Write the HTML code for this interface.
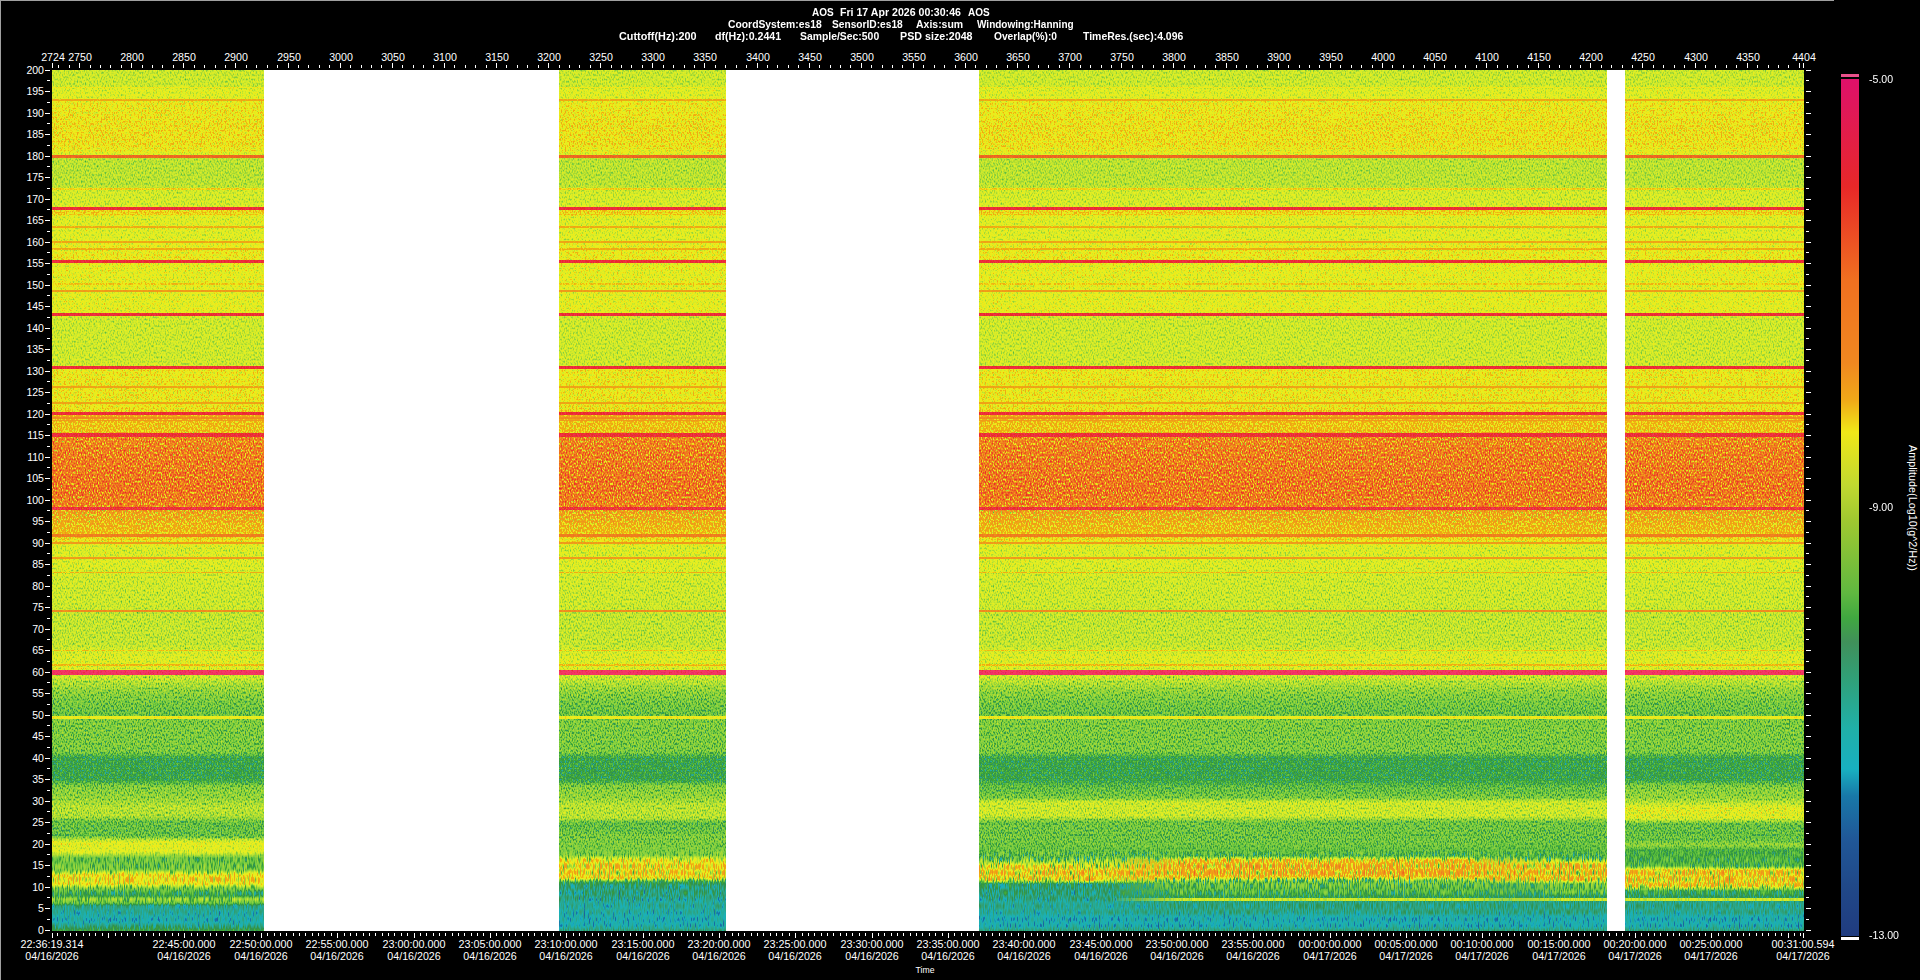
<!DOCTYPE html><html><head><meta charset="utf-8"><style>
html,body{margin:0;padding:0;background:#000;width:1920px;height:980px;overflow:hidden;position:relative;font-family:"Liberation Sans", sans-serif;color:#fff}
.t{position:absolute;white-space:nowrap;line-height:12px;font-size:10.5px}
.b{font-weight:bold}
.c{transform:translateX(-50%)}
.r{transform:translateX(-100%)}
</style></head><body>
<div style="position:absolute;left:0;top:0;width:1834px;height:1px;background:#a0a0a0"></div>
<div style="position:absolute;left:0;top:0;width:1px;height:980px;background:#a0a0a0"></div>
<div style="position:absolute;left:52px;top:70px;width:1752px;height:861px;background:#fff"></div>
<svg style="position:absolute;left:52px;top:70px" width="1752" height="861" shape-rendering="crispEdges"><defs><filter id="sp" x="0" y="0" width="1" height="1" color-interpolation-filters="sRGB"><feColorMatrix in="SourceGraphic" type="matrix" values="1 0 0 0 0 1 0 0 0 0 1 0 0 0 0 0 0 0 0 1" result="base"/><feColorMatrix in="SourceGraphic" type="matrix" values="0 1 0 0 0 0 1 0 0 0 0 1 0 0 0 0 0 0 0 1" result="amp"/><feColorMatrix in="SourceGraphic" type="matrix" values="0 0 1 0 0 0 0 1 0 0 0 0 1 0 0 0 0 0 0 1" result="mix"/><feTurbulence type="fractalNoise" baseFrequency="0.75 0.45" numOctaves="1" seed="7" result="t1"/><feColorMatrix in="t1" type="matrix" values="1 0 0 0 0 1 0 0 0 0 1 0 0 0 0 0 0 0 0 1" result="n1"/><feTurbulence type="fractalNoise" baseFrequency="0.8 0.15" numOctaves="1" seed="11" result="t2"/><feColorMatrix in="t2" type="matrix" values="1 0 0 0 0 1 0 0 0 0 1 0 0 0 0 0 0 0 0 1" result="n2"/><feComposite in="n2" in2="mix" operator="arithmetic" k1="1" k2="0" k3="0" k4="0" result="p"/><feComposite in="n1" in2="mix" operator="arithmetic" k1="-1" k2="1" k3="0" k4="0" result="q"/><feComposite in="p" in2="q" operator="arithmetic" k1="0" k2="1" k3="1" k4="0" result="n0"/><feComponentTransfer in="n0" result="n"><feFuncR type="table" tableValues="0.000 0.000 0.000 0.062 0.125 0.188 0.250 0.312 0.375 0.438 0.500 0.530 0.560 0.590 0.620 0.650 0.680 0.710 0.740 0.770 0.800"/><feFuncG type="table" tableValues="0.000 0.000 0.000 0.062 0.125 0.188 0.250 0.312 0.375 0.438 0.500 0.530 0.560 0.590 0.620 0.650 0.680 0.710 0.740 0.770 0.800"/><feFuncB type="table" tableValues="0.000 0.000 0.000 0.062 0.125 0.188 0.250 0.312 0.375 0.438 0.500 0.530 0.560 0.590 0.620 0.650 0.680 0.710 0.740 0.770 0.800"/></feComponentTransfer><feComposite in="amp" in2="n" operator="arithmetic" k1="1.0" k2="-0.5" k3="0" k4="0.5" result="x"/><feComposite in="base" in2="x" operator="arithmetic" k1="0" k2="1" k3="1" k4="-0.5" result="y"/><feComponentTransfer in="y"><feFuncR type="table" tableValues="0.125 0.125 0.125 0.125 0.125 0.125 0.125 0.125 0.125 0.125 0.125 0.125 0.122 0.116 0.109 0.103 0.097 0.094 0.094 0.094 0.097 0.103 0.110 0.116 0.123 0.132 0.143 0.154 0.165 0.176 0.187 0.188 0.188 0.188 0.188 0.202 0.224 0.246 0.286 0.329 0.372 0.414 0.455 0.496 0.537 0.570 0.603 0.637 0.670 0.704 0.739 0.774 0.803 0.831 0.858 0.885 0.911 0.921 0.930 0.940 0.941 0.941 0.941 0.941 0.941 0.941 0.941 0.941 0.941 0.941 0.941 0.941 0.941 0.941 0.941 0.941 0.941 0.940 0.937 0.934 0.931 0.928 0.925 0.923 0.920 0.917 0.914 0.911 0.916 0.926 0.937 0.947 0.957 0.967 0.956 0.924 0.891 0.878 0.878 0.878 0.878"/><feFuncG type="table" tableValues="0.235 0.243 0.251 0.259 0.267 0.275 0.282 0.294 0.305 0.317 0.328 0.339 0.358 0.384 0.409 0.435 0.460 0.512 0.580 0.649 0.690 0.690 0.690 0.690 0.690 0.684 0.673 0.662 0.651 0.640 0.629 0.614 0.600 0.585 0.571 0.585 0.618 0.652 0.685 0.717 0.750 0.768 0.784 0.801 0.817 0.827 0.837 0.847 0.857 0.870 0.887 0.905 0.915 0.921 0.928 0.935 0.940 0.930 0.921 0.911 0.786 0.686 0.672 0.658 0.644 0.630 0.615 0.601 0.587 0.573 0.558 0.540 0.522 0.504 0.486 0.468 0.450 0.429 0.403 0.376 0.350 0.324 0.298 0.272 0.246 0.220 0.193 0.167 0.165 0.177 0.190 0.203 0.216 0.229 0.216 0.178 0.141 0.115 0.098 0.080 0.063"/><feFuncB type="table" tableValues="0.502 0.507 0.512 0.518 0.523 0.528 0.533 0.545 0.556 0.568 0.579 0.590 0.602 0.615 0.628 0.641 0.654 0.676 0.706 0.735 0.745 0.725 0.706 0.686 0.667 0.639 0.606 0.573 0.540 0.507 0.474 0.431 0.387 0.344 0.300 0.269 0.246 0.224 0.228 0.239 0.250 0.251 0.251 0.251 0.250 0.236 0.223 0.210 0.196 0.188 0.188 0.188 0.179 0.165 0.151 0.138 0.125 0.115 0.105 0.095 0.076 0.065 0.072 0.079 0.086 0.093 0.100 0.107 0.114 0.121 0.125 0.125 0.125 0.125 0.125 0.125 0.125 0.127 0.130 0.132 0.135 0.138 0.141 0.144 0.147 0.150 0.153 0.156 0.183 0.227 0.271 0.314 0.358 0.402 0.415 0.399 0.383 0.383 0.394 0.405 0.416"/><feFuncA type="identity"/></feComponentTransfer></filter><linearGradient id="g_A" gradientUnits="userSpaceOnUse" x1="0" y1="0" x2="0" y2="861"><stop offset="0.00000" stop-color="rgb(133,82,0)"/><stop offset="0.01858" stop-color="rgb(133,82,0)"/><stop offset="0.02207" stop-color="rgb(140,82,0)"/><stop offset="0.03368" stop-color="rgb(140,82,0)"/><stop offset="0.03833" stop-color="rgb(147,82,0)"/><stop offset="0.05575" stop-color="rgb(148,82,0)"/><stop offset="0.06388" stop-color="rgb(149,82,0)"/><stop offset="0.08711" stop-color="rgb(149,82,0)"/><stop offset="0.09524" stop-color="rgb(145,82,0)"/><stop offset="0.10221" stop-color="rgb(128,82,0)"/><stop offset="0.13473" stop-color="rgb(128,82,0)"/><stop offset="0.14170" stop-color="rgb(136,82,0)"/><stop offset="0.15679" stop-color="rgb(136,82,0)"/><stop offset="0.16492" stop-color="rgb(153,82,0)"/><stop offset="0.17189" stop-color="rgb(140,82,0)"/><stop offset="0.19744" stop-color="rgb(140,82,0)"/><stop offset="0.20325" stop-color="rgb(144,82,0)"/><stop offset="0.21835" stop-color="rgb(147,82,0)"/><stop offset="0.22648" stop-color="rgb(144,82,0)"/><stop offset="0.24623" stop-color="rgb(143,82,0)"/><stop offset="0.25784" stop-color="rgb(142,82,0)"/><stop offset="0.28107" stop-color="rgb(143,82,0)"/><stop offset="0.28804" stop-color="rgb(134,82,0)"/><stop offset="0.34262" stop-color="rgb(134,82,0)"/><stop offset="0.34843" stop-color="rgb(147,82,0)"/><stop offset="0.36585" stop-color="rgb(147,82,0)"/><stop offset="0.38792" stop-color="rgb(147,82,0)"/><stop offset="0.39605" stop-color="rgb(150,82,0)"/><stop offset="0.40186" stop-color="rgb(163,82,0)"/><stop offset="0.40767" stop-color="rgb(156,82,0)"/><stop offset="0.41812" stop-color="rgb(155,82,0)"/><stop offset="0.42044" stop-color="rgb(154,120,0)"/><stop offset="0.42625" stop-color="rgb(184,217,0)"/><stop offset="0.44135" stop-color="rgb(189,217,0)"/><stop offset="0.47619" stop-color="rgb(193,217,0)"/><stop offset="0.49361" stop-color="rgb(193,217,0)"/><stop offset="0.50639" stop-color="rgb(186,217,0)"/><stop offset="0.51336" stop-color="rgb(168,186,0)"/><stop offset="0.53426" stop-color="rgb(157,92,0)"/><stop offset="0.53659" stop-color="rgb(156,92,0)"/><stop offset="0.54239" stop-color="rgb(152,92,0)"/><stop offset="0.55052" stop-color="rgb(144,92,0)"/><stop offset="0.55517" stop-color="rgb(139,92,0)"/><stop offset="0.56446" stop-color="rgb(139,92,0)"/><stop offset="0.56911" stop-color="rgb(140,92,0)"/><stop offset="0.59233" stop-color="rgb(135,92,0)"/><stop offset="0.62602" stop-color="rgb(133,92,0)"/><stop offset="0.63066" stop-color="rgb(131,92,0)"/><stop offset="0.66783" stop-color="rgb(131,92,0)"/><stop offset="0.67944" stop-color="rgb(139,92,0)"/><stop offset="0.68525" stop-color="rgb(139,92,0)"/><stop offset="0.69454" stop-color="rgb(140,97,0)"/><stop offset="0.70383" stop-color="rgb(133,102,0)"/><stop offset="0.70499" stop-color="rgb(133,102,0)"/><stop offset="0.72009" stop-color="rgb(117,102,0)"/><stop offset="0.73171" stop-color="rgb(110,102,0)"/><stop offset="0.74797" stop-color="rgb(105,102,0)"/><stop offset="0.75377" stop-color="rgb(111,102,0)"/><stop offset="0.79210" stop-color="rgb(110,102,0)"/><stop offset="0.79907" stop-color="rgb(92,102,0)"/><stop offset="0.82462" stop-color="rgb(92,102,0)"/><stop offset="0.83159" stop-color="rgb(112,102,0)"/><stop offset="0.84553" stop-color="rgb(117,102,0)"/><stop offset="0.85714" stop-color="rgb(128,102,0)"/><stop offset="0.86643" stop-color="rgb(125,102,0)"/><stop offset="0.87340" stop-color="rgb(105,102,0)"/><stop offset="0.88966" stop-color="rgb(105,102,0)"/><stop offset="0.89431" stop-color="rgb(129,102,0)"/><stop offset="0.89663" stop-color="rgb(142,102,23)"/><stop offset="0.90825" stop-color="rgb(140,102,139)"/><stop offset="0.91521" stop-color="rgb(105,102,209)"/><stop offset="0.91986" stop-color="rgb(106,102,255)"/><stop offset="0.92683" stop-color="rgb(109,102,255)"/><stop offset="0.92915" stop-color="rgb(110,117,255)"/><stop offset="0.93264" stop-color="rgb(133,140,255)"/><stop offset="0.93496" stop-color="rgb(149,140,255)"/><stop offset="0.94541" stop-color="rgb(147,140,255)"/><stop offset="0.94774" stop-color="rgb(129,140,255)"/><stop offset="0.95006" stop-color="rgb(112,128,255)"/><stop offset="0.95238" stop-color="rgb(104,115,255)"/><stop offset="0.95587" stop-color="rgb(92,115,255)"/><stop offset="0.95935" stop-color="rgb(92,115,255)"/><stop offset="0.96283" stop-color="rgb(117,115,255)"/><stop offset="0.96748" stop-color="rgb(105,115,255)"/><stop offset="0.97096" stop-color="rgb(74,89,255)"/><stop offset="0.98142" stop-color="rgb(64,89,255)"/><stop offset="0.98955" stop-color="rgb(59,89,255)"/><stop offset="0.99419" stop-color="rgb(76,89,255)"/><stop offset="0.99884" stop-color="rgb(92,89,255)"/><stop offset="1.00000" stop-color="rgb(92,89,255)"/></linearGradient><linearGradient id="g_B" gradientUnits="userSpaceOnUse" x1="0" y1="0" x2="0" y2="861"><stop offset="0.00000" stop-color="rgb(133,82,0)"/><stop offset="0.01858" stop-color="rgb(133,82,0)"/><stop offset="0.02207" stop-color="rgb(140,82,0)"/><stop offset="0.03368" stop-color="rgb(140,82,0)"/><stop offset="0.03833" stop-color="rgb(147,82,0)"/><stop offset="0.05575" stop-color="rgb(148,82,0)"/><stop offset="0.06388" stop-color="rgb(149,82,0)"/><stop offset="0.08711" stop-color="rgb(149,82,0)"/><stop offset="0.09524" stop-color="rgb(145,82,0)"/><stop offset="0.10221" stop-color="rgb(128,82,0)"/><stop offset="0.13473" stop-color="rgb(128,82,0)"/><stop offset="0.14170" stop-color="rgb(136,82,0)"/><stop offset="0.15679" stop-color="rgb(136,82,0)"/><stop offset="0.16492" stop-color="rgb(153,82,0)"/><stop offset="0.17189" stop-color="rgb(140,82,0)"/><stop offset="0.19744" stop-color="rgb(140,82,0)"/><stop offset="0.20325" stop-color="rgb(144,82,0)"/><stop offset="0.21835" stop-color="rgb(147,82,0)"/><stop offset="0.22648" stop-color="rgb(144,82,0)"/><stop offset="0.24623" stop-color="rgb(143,82,0)"/><stop offset="0.25784" stop-color="rgb(142,82,0)"/><stop offset="0.28107" stop-color="rgb(143,82,0)"/><stop offset="0.28804" stop-color="rgb(134,82,0)"/><stop offset="0.34262" stop-color="rgb(134,82,0)"/><stop offset="0.34843" stop-color="rgb(147,82,0)"/><stop offset="0.36585" stop-color="rgb(147,82,0)"/><stop offset="0.38792" stop-color="rgb(147,82,0)"/><stop offset="0.39605" stop-color="rgb(150,82,0)"/><stop offset="0.40186" stop-color="rgb(163,82,0)"/><stop offset="0.40767" stop-color="rgb(156,82,0)"/><stop offset="0.41812" stop-color="rgb(155,82,0)"/><stop offset="0.42044" stop-color="rgb(154,120,0)"/><stop offset="0.42625" stop-color="rgb(184,217,0)"/><stop offset="0.44135" stop-color="rgb(189,217,0)"/><stop offset="0.47619" stop-color="rgb(193,217,0)"/><stop offset="0.49361" stop-color="rgb(193,217,0)"/><stop offset="0.50639" stop-color="rgb(186,217,0)"/><stop offset="0.51336" stop-color="rgb(168,186,0)"/><stop offset="0.53426" stop-color="rgb(157,92,0)"/><stop offset="0.53659" stop-color="rgb(156,92,0)"/><stop offset="0.54239" stop-color="rgb(152,92,0)"/><stop offset="0.55052" stop-color="rgb(144,92,0)"/><stop offset="0.55517" stop-color="rgb(139,92,0)"/><stop offset="0.56446" stop-color="rgb(139,92,0)"/><stop offset="0.56911" stop-color="rgb(140,92,0)"/><stop offset="0.59233" stop-color="rgb(135,92,0)"/><stop offset="0.62602" stop-color="rgb(133,92,0)"/><stop offset="0.63066" stop-color="rgb(131,92,0)"/><stop offset="0.66783" stop-color="rgb(131,92,0)"/><stop offset="0.67944" stop-color="rgb(139,92,0)"/><stop offset="0.68525" stop-color="rgb(139,92,0)"/><stop offset="0.69454" stop-color="rgb(140,97,0)"/><stop offset="0.70383" stop-color="rgb(133,102,0)"/><stop offset="0.70499" stop-color="rgb(133,102,0)"/><stop offset="0.72009" stop-color="rgb(117,102,0)"/><stop offset="0.73171" stop-color="rgb(110,102,0)"/><stop offset="0.74797" stop-color="rgb(105,102,0)"/><stop offset="0.75377" stop-color="rgb(111,102,0)"/><stop offset="0.79210" stop-color="rgb(110,102,0)"/><stop offset="0.79907" stop-color="rgb(92,102,0)"/><stop offset="0.82462" stop-color="rgb(92,102,0)"/><stop offset="0.83159" stop-color="rgb(112,102,0)"/><stop offset="0.84553" stop-color="rgb(117,102,0)"/><stop offset="0.85366" stop-color="rgb(128,102,0)"/><stop offset="0.86876" stop-color="rgb(128,102,0)"/><stop offset="0.87340" stop-color="rgb(105,102,0)"/><stop offset="0.88269" stop-color="rgb(105,102,0)"/><stop offset="0.88966" stop-color="rgb(110,102,0)"/><stop offset="0.89431" stop-color="rgb(110,102,0)"/><stop offset="0.90825" stop-color="rgb(110,102,139)"/><stop offset="0.91173" stop-color="rgb(110,134,174)"/><stop offset="0.91521" stop-color="rgb(131,166,209)"/><stop offset="0.91754" stop-color="rgb(145,166,232)"/><stop offset="0.91986" stop-color="rgb(147,166,255)"/><stop offset="0.92451" stop-color="rgb(150,166,255)"/><stop offset="0.93844" stop-color="rgb(150,166,255)"/><stop offset="0.94077" stop-color="rgb(121,166,255)"/><stop offset="0.94309" stop-color="rgb(92,140,255)"/><stop offset="0.94541" stop-color="rgb(84,115,255)"/><stop offset="0.94774" stop-color="rgb(76,115,255)"/><stop offset="0.95935" stop-color="rgb(76,115,255)"/><stop offset="0.96400" stop-color="rgb(69,115,255)"/><stop offset="0.96748" stop-color="rgb(68,89,255)"/><stop offset="0.97793" stop-color="rgb(66,89,255)"/><stop offset="0.98490" stop-color="rgb(59,89,255)"/><stop offset="0.99303" stop-color="rgb(59,89,255)"/><stop offset="0.99884" stop-color="rgb(76,89,255)"/><stop offset="1.00000" stop-color="rgb(76,89,255)"/></linearGradient><linearGradient id="g_CL" gradientUnits="userSpaceOnUse" x1="0" y1="0" x2="0" y2="861"><stop offset="0.00000" stop-color="rgb(133,82,0)"/><stop offset="0.01858" stop-color="rgb(133,82,0)"/><stop offset="0.02207" stop-color="rgb(140,82,0)"/><stop offset="0.03368" stop-color="rgb(140,82,0)"/><stop offset="0.03833" stop-color="rgb(147,82,0)"/><stop offset="0.05575" stop-color="rgb(148,82,0)"/><stop offset="0.06388" stop-color="rgb(149,82,0)"/><stop offset="0.08711" stop-color="rgb(149,82,0)"/><stop offset="0.09524" stop-color="rgb(145,82,0)"/><stop offset="0.10221" stop-color="rgb(128,82,0)"/><stop offset="0.13473" stop-color="rgb(128,82,0)"/><stop offset="0.14170" stop-color="rgb(136,82,0)"/><stop offset="0.15679" stop-color="rgb(136,82,0)"/><stop offset="0.16492" stop-color="rgb(153,82,0)"/><stop offset="0.17189" stop-color="rgb(140,82,0)"/><stop offset="0.19744" stop-color="rgb(140,82,0)"/><stop offset="0.20325" stop-color="rgb(144,82,0)"/><stop offset="0.21835" stop-color="rgb(147,82,0)"/><stop offset="0.22648" stop-color="rgb(144,82,0)"/><stop offset="0.24623" stop-color="rgb(143,82,0)"/><stop offset="0.25784" stop-color="rgb(142,82,0)"/><stop offset="0.28107" stop-color="rgb(143,82,0)"/><stop offset="0.28804" stop-color="rgb(134,82,0)"/><stop offset="0.34262" stop-color="rgb(134,82,0)"/><stop offset="0.34843" stop-color="rgb(147,82,0)"/><stop offset="0.36585" stop-color="rgb(147,82,0)"/><stop offset="0.38792" stop-color="rgb(147,82,0)"/><stop offset="0.39605" stop-color="rgb(150,82,0)"/><stop offset="0.40186" stop-color="rgb(163,82,0)"/><stop offset="0.40767" stop-color="rgb(156,82,0)"/><stop offset="0.41812" stop-color="rgb(155,82,0)"/><stop offset="0.42044" stop-color="rgb(154,120,0)"/><stop offset="0.42625" stop-color="rgb(184,217,0)"/><stop offset="0.44135" stop-color="rgb(189,217,0)"/><stop offset="0.47619" stop-color="rgb(193,217,0)"/><stop offset="0.49361" stop-color="rgb(193,217,0)"/><stop offset="0.50639" stop-color="rgb(186,217,0)"/><stop offset="0.51336" stop-color="rgb(168,186,0)"/><stop offset="0.53426" stop-color="rgb(157,92,0)"/><stop offset="0.53659" stop-color="rgb(156,92,0)"/><stop offset="0.54239" stop-color="rgb(152,92,0)"/><stop offset="0.55052" stop-color="rgb(144,92,0)"/><stop offset="0.55517" stop-color="rgb(139,92,0)"/><stop offset="0.56446" stop-color="rgb(139,92,0)"/><stop offset="0.56911" stop-color="rgb(140,92,0)"/><stop offset="0.59233" stop-color="rgb(135,92,0)"/><stop offset="0.62602" stop-color="rgb(133,92,0)"/><stop offset="0.63066" stop-color="rgb(131,92,0)"/><stop offset="0.66783" stop-color="rgb(131,92,0)"/><stop offset="0.67944" stop-color="rgb(139,92,0)"/><stop offset="0.68525" stop-color="rgb(139,92,0)"/><stop offset="0.69454" stop-color="rgb(140,97,0)"/><stop offset="0.70383" stop-color="rgb(133,102,0)"/><stop offset="0.70499" stop-color="rgb(133,102,0)"/><stop offset="0.72009" stop-color="rgb(117,102,0)"/><stop offset="0.73171" stop-color="rgb(110,102,0)"/><stop offset="0.74797" stop-color="rgb(105,102,0)"/><stop offset="0.75377" stop-color="rgb(111,102,0)"/><stop offset="0.79210" stop-color="rgb(110,102,0)"/><stop offset="0.79907" stop-color="rgb(92,102,0)"/><stop offset="0.82462" stop-color="rgb(92,102,0)"/><stop offset="0.83159" stop-color="rgb(102,102,0)"/><stop offset="0.84553" stop-color="rgb(110,102,0)"/><stop offset="0.85017" stop-color="rgb(134,102,0)"/><stop offset="0.86643" stop-color="rgb(134,102,0)"/><stop offset="0.87340" stop-color="rgb(107,102,0)"/><stop offset="0.89431" stop-color="rgb(107,102,0)"/><stop offset="0.90012" stop-color="rgb(107,102,58)"/><stop offset="0.90592" stop-color="rgb(105,102,116)"/><stop offset="0.91289" stop-color="rgb(103,204,185)"/><stop offset="0.91521" stop-color="rgb(102,204,209)"/><stop offset="0.91986" stop-color="rgb(122,204,255)"/><stop offset="0.92451" stop-color="rgb(143,204,255)"/><stop offset="0.93148" stop-color="rgb(152,204,255)"/><stop offset="0.94077" stop-color="rgb(150,204,255)"/><stop offset="0.94309" stop-color="rgb(115,204,255)"/><stop offset="0.94541" stop-color="rgb(79,159,255)"/><stop offset="0.94774" stop-color="rgb(79,115,255)"/><stop offset="0.96167" stop-color="rgb(76,115,255)"/><stop offset="0.96400" stop-color="rgb(73,115,255)"/><stop offset="0.96632" stop-color="rgb(69,98,255)"/><stop offset="0.96748" stop-color="rgb(69,89,255)"/><stop offset="0.97909" stop-color="rgb(69,89,255)"/><stop offset="0.98374" stop-color="rgb(59,89,255)"/><stop offset="0.99419" stop-color="rgb(59,89,255)"/><stop offset="0.99884" stop-color="rgb(76,89,255)"/><stop offset="1.00000" stop-color="rgb(76,89,255)"/></linearGradient><linearGradient id="g_CM" gradientUnits="userSpaceOnUse" x1="0" y1="0" x2="0" y2="861"><stop offset="0.00000" stop-color="rgb(133,82,0)"/><stop offset="0.01858" stop-color="rgb(133,82,0)"/><stop offset="0.02207" stop-color="rgb(140,82,0)"/><stop offset="0.03368" stop-color="rgb(140,82,0)"/><stop offset="0.03833" stop-color="rgb(147,82,0)"/><stop offset="0.05575" stop-color="rgb(148,82,0)"/><stop offset="0.06388" stop-color="rgb(149,82,0)"/><stop offset="0.08711" stop-color="rgb(149,82,0)"/><stop offset="0.09524" stop-color="rgb(145,82,0)"/><stop offset="0.10221" stop-color="rgb(128,82,0)"/><stop offset="0.13473" stop-color="rgb(128,82,0)"/><stop offset="0.14170" stop-color="rgb(136,82,0)"/><stop offset="0.15679" stop-color="rgb(136,82,0)"/><stop offset="0.16492" stop-color="rgb(153,82,0)"/><stop offset="0.17189" stop-color="rgb(140,82,0)"/><stop offset="0.19744" stop-color="rgb(140,82,0)"/><stop offset="0.20325" stop-color="rgb(144,82,0)"/><stop offset="0.21835" stop-color="rgb(147,82,0)"/><stop offset="0.22648" stop-color="rgb(144,82,0)"/><stop offset="0.24623" stop-color="rgb(143,82,0)"/><stop offset="0.25784" stop-color="rgb(142,82,0)"/><stop offset="0.28107" stop-color="rgb(143,82,0)"/><stop offset="0.28804" stop-color="rgb(134,82,0)"/><stop offset="0.34262" stop-color="rgb(134,82,0)"/><stop offset="0.34843" stop-color="rgb(147,82,0)"/><stop offset="0.36585" stop-color="rgb(147,82,0)"/><stop offset="0.38792" stop-color="rgb(147,82,0)"/><stop offset="0.39605" stop-color="rgb(150,82,0)"/><stop offset="0.40186" stop-color="rgb(163,82,0)"/><stop offset="0.40767" stop-color="rgb(156,82,0)"/><stop offset="0.41812" stop-color="rgb(155,82,0)"/><stop offset="0.42044" stop-color="rgb(154,120,0)"/><stop offset="0.42625" stop-color="rgb(184,217,0)"/><stop offset="0.44135" stop-color="rgb(189,217,0)"/><stop offset="0.47619" stop-color="rgb(193,217,0)"/><stop offset="0.49361" stop-color="rgb(193,217,0)"/><stop offset="0.50639" stop-color="rgb(186,217,0)"/><stop offset="0.51336" stop-color="rgb(168,186,0)"/><stop offset="0.53426" stop-color="rgb(157,92,0)"/><stop offset="0.53659" stop-color="rgb(156,92,0)"/><stop offset="0.54239" stop-color="rgb(152,92,0)"/><stop offset="0.55052" stop-color="rgb(144,92,0)"/><stop offset="0.55517" stop-color="rgb(139,92,0)"/><stop offset="0.56446" stop-color="rgb(139,92,0)"/><stop offset="0.56911" stop-color="rgb(140,92,0)"/><stop offset="0.59233" stop-color="rgb(135,92,0)"/><stop offset="0.62602" stop-color="rgb(133,92,0)"/><stop offset="0.63066" stop-color="rgb(131,92,0)"/><stop offset="0.66783" stop-color="rgb(131,92,0)"/><stop offset="0.67944" stop-color="rgb(139,92,0)"/><stop offset="0.68525" stop-color="rgb(139,92,0)"/><stop offset="0.69454" stop-color="rgb(140,97,0)"/><stop offset="0.70383" stop-color="rgb(133,102,0)"/><stop offset="0.70499" stop-color="rgb(133,102,0)"/><stop offset="0.72009" stop-color="rgb(117,102,0)"/><stop offset="0.73171" stop-color="rgb(110,102,0)"/><stop offset="0.74797" stop-color="rgb(105,102,0)"/><stop offset="0.75377" stop-color="rgb(111,102,0)"/><stop offset="0.79210" stop-color="rgb(110,102,0)"/><stop offset="0.79907" stop-color="rgb(92,102,0)"/><stop offset="0.82462" stop-color="rgb(92,102,0)"/><stop offset="0.83159" stop-color="rgb(102,102,0)"/><stop offset="0.84553" stop-color="rgb(110,102,0)"/><stop offset="0.85017" stop-color="rgb(134,102,0)"/><stop offset="0.86643" stop-color="rgb(134,102,0)"/><stop offset="0.87340" stop-color="rgb(107,102,0)"/><stop offset="0.89431" stop-color="rgb(107,102,0)"/><stop offset="0.90012" stop-color="rgb(107,102,58)"/><stop offset="0.90592" stop-color="rgb(104,102,116)"/><stop offset="0.91289" stop-color="rgb(99,204,185)"/><stop offset="0.91754" stop-color="rgb(153,204,232)"/><stop offset="0.91986" stop-color="rgb(156,204,255)"/><stop offset="0.92451" stop-color="rgb(163,204,255)"/><stop offset="0.93612" stop-color="rgb(163,204,255)"/><stop offset="0.94193" stop-color="rgb(107,204,255)"/><stop offset="0.94309" stop-color="rgb(107,204,255)"/><stop offset="0.94774" stop-color="rgb(104,115,255)"/><stop offset="0.95238" stop-color="rgb(102,115,255)"/><stop offset="0.95935" stop-color="rgb(92,115,255)"/><stop offset="0.96400" stop-color="rgb(82,115,255)"/><stop offset="0.96632" stop-color="rgb(76,98,255)"/><stop offset="0.96748" stop-color="rgb(76,89,255)"/><stop offset="0.97909" stop-color="rgb(74,89,255)"/><stop offset="0.98374" stop-color="rgb(59,89,255)"/><stop offset="0.99419" stop-color="rgb(59,89,255)"/><stop offset="0.99884" stop-color="rgb(76,89,255)"/><stop offset="1.00000" stop-color="rgb(76,89,255)"/></linearGradient><linearGradient id="g_CR" gradientUnits="userSpaceOnUse" x1="0" y1="0" x2="0" y2="861"><stop offset="0.00000" stop-color="rgb(133,82,0)"/><stop offset="0.01858" stop-color="rgb(133,82,0)"/><stop offset="0.02207" stop-color="rgb(140,82,0)"/><stop offset="0.03368" stop-color="rgb(140,82,0)"/><stop offset="0.03833" stop-color="rgb(147,82,0)"/><stop offset="0.05575" stop-color="rgb(148,82,0)"/><stop offset="0.06388" stop-color="rgb(149,82,0)"/><stop offset="0.08711" stop-color="rgb(149,82,0)"/><stop offset="0.09524" stop-color="rgb(145,82,0)"/><stop offset="0.10221" stop-color="rgb(128,82,0)"/><stop offset="0.13473" stop-color="rgb(128,82,0)"/><stop offset="0.14170" stop-color="rgb(136,82,0)"/><stop offset="0.15679" stop-color="rgb(136,82,0)"/><stop offset="0.16492" stop-color="rgb(153,82,0)"/><stop offset="0.17189" stop-color="rgb(140,82,0)"/><stop offset="0.19744" stop-color="rgb(140,82,0)"/><stop offset="0.20325" stop-color="rgb(144,82,0)"/><stop offset="0.21835" stop-color="rgb(147,82,0)"/><stop offset="0.22648" stop-color="rgb(144,82,0)"/><stop offset="0.24623" stop-color="rgb(143,82,0)"/><stop offset="0.25784" stop-color="rgb(142,82,0)"/><stop offset="0.28107" stop-color="rgb(143,82,0)"/><stop offset="0.28804" stop-color="rgb(134,82,0)"/><stop offset="0.34262" stop-color="rgb(134,82,0)"/><stop offset="0.34843" stop-color="rgb(147,82,0)"/><stop offset="0.36585" stop-color="rgb(147,82,0)"/><stop offset="0.38792" stop-color="rgb(147,82,0)"/><stop offset="0.39605" stop-color="rgb(150,82,0)"/><stop offset="0.40186" stop-color="rgb(163,82,0)"/><stop offset="0.40767" stop-color="rgb(156,82,0)"/><stop offset="0.41812" stop-color="rgb(155,82,0)"/><stop offset="0.42044" stop-color="rgb(154,120,0)"/><stop offset="0.42625" stop-color="rgb(184,217,0)"/><stop offset="0.44135" stop-color="rgb(189,217,0)"/><stop offset="0.47619" stop-color="rgb(193,217,0)"/><stop offset="0.49361" stop-color="rgb(193,217,0)"/><stop offset="0.50639" stop-color="rgb(186,217,0)"/><stop offset="0.51336" stop-color="rgb(168,186,0)"/><stop offset="0.53426" stop-color="rgb(157,92,0)"/><stop offset="0.53659" stop-color="rgb(156,92,0)"/><stop offset="0.54239" stop-color="rgb(152,92,0)"/><stop offset="0.55052" stop-color="rgb(144,92,0)"/><stop offset="0.55517" stop-color="rgb(139,92,0)"/><stop offset="0.56446" stop-color="rgb(139,92,0)"/><stop offset="0.56911" stop-color="rgb(140,92,0)"/><stop offset="0.59233" stop-color="rgb(135,92,0)"/><stop offset="0.62602" stop-color="rgb(133,92,0)"/><stop offset="0.63066" stop-color="rgb(131,92,0)"/><stop offset="0.66783" stop-color="rgb(131,92,0)"/><stop offset="0.67944" stop-color="rgb(139,92,0)"/><stop offset="0.68525" stop-color="rgb(139,92,0)"/><stop offset="0.69454" stop-color="rgb(140,97,0)"/><stop offset="0.70383" stop-color="rgb(133,102,0)"/><stop offset="0.70499" stop-color="rgb(133,102,0)"/><stop offset="0.72009" stop-color="rgb(117,102,0)"/><stop offset="0.73171" stop-color="rgb(110,102,0)"/><stop offset="0.74797" stop-color="rgb(105,102,0)"/><stop offset="0.75377" stop-color="rgb(111,102,0)"/><stop offset="0.79210" stop-color="rgb(110,102,0)"/><stop offset="0.79907" stop-color="rgb(92,102,0)"/><stop offset="0.82462" stop-color="rgb(92,102,0)"/><stop offset="0.83159" stop-color="rgb(102,102,0)"/><stop offset="0.84553" stop-color="rgb(110,102,0)"/><stop offset="0.85017" stop-color="rgb(134,102,0)"/><stop offset="0.86643" stop-color="rgb(134,102,0)"/><stop offset="0.87340" stop-color="rgb(107,102,0)"/><stop offset="0.89431" stop-color="rgb(105,102,0)"/><stop offset="0.90012" stop-color="rgb(105,102,58)"/><stop offset="0.90592" stop-color="rgb(102,102,116)"/><stop offset="0.91289" stop-color="rgb(98,204,185)"/><stop offset="0.91521" stop-color="rgb(97,204,209)"/><stop offset="0.91986" stop-color="rgb(138,204,255)"/><stop offset="0.92102" stop-color="rgb(148,204,255)"/><stop offset="0.92683" stop-color="rgb(154,204,255)"/><stop offset="0.94077" stop-color="rgb(153,204,255)"/><stop offset="0.94309" stop-color="rgb(130,204,255)"/><stop offset="0.94541" stop-color="rgb(107,159,255)"/><stop offset="0.94774" stop-color="rgb(106,115,255)"/><stop offset="0.95470" stop-color="rgb(105,115,255)"/><stop offset="0.95935" stop-color="rgb(87,115,255)"/><stop offset="0.96400" stop-color="rgb(80,115,255)"/><stop offset="0.96632" stop-color="rgb(76,98,255)"/><stop offset="0.96748" stop-color="rgb(76,89,255)"/><stop offset="0.97909" stop-color="rgb(76,89,255)"/><stop offset="0.98374" stop-color="rgb(59,89,255)"/><stop offset="0.99419" stop-color="rgb(59,89,255)"/><stop offset="0.99884" stop-color="rgb(76,89,255)"/><stop offset="1.00000" stop-color="rgb(76,89,255)"/></linearGradient><linearGradient id="g_D" gradientUnits="userSpaceOnUse" x1="0" y1="0" x2="0" y2="861"><stop offset="0.00000" stop-color="rgb(133,82,0)"/><stop offset="0.01858" stop-color="rgb(133,82,0)"/><stop offset="0.02207" stop-color="rgb(140,82,0)"/><stop offset="0.03368" stop-color="rgb(140,82,0)"/><stop offset="0.03833" stop-color="rgb(147,82,0)"/><stop offset="0.05575" stop-color="rgb(148,82,0)"/><stop offset="0.06388" stop-color="rgb(149,82,0)"/><stop offset="0.08711" stop-color="rgb(149,82,0)"/><stop offset="0.09524" stop-color="rgb(145,82,0)"/><stop offset="0.10221" stop-color="rgb(128,82,0)"/><stop offset="0.13473" stop-color="rgb(128,82,0)"/><stop offset="0.14170" stop-color="rgb(136,82,0)"/><stop offset="0.15679" stop-color="rgb(136,82,0)"/><stop offset="0.16492" stop-color="rgb(153,82,0)"/><stop offset="0.17189" stop-color="rgb(140,82,0)"/><stop offset="0.19744" stop-color="rgb(140,82,0)"/><stop offset="0.20325" stop-color="rgb(144,82,0)"/><stop offset="0.21835" stop-color="rgb(147,82,0)"/><stop offset="0.22648" stop-color="rgb(144,82,0)"/><stop offset="0.24623" stop-color="rgb(143,82,0)"/><stop offset="0.25784" stop-color="rgb(142,82,0)"/><stop offset="0.28107" stop-color="rgb(143,82,0)"/><stop offset="0.28804" stop-color="rgb(134,82,0)"/><stop offset="0.34262" stop-color="rgb(134,82,0)"/><stop offset="0.34843" stop-color="rgb(147,82,0)"/><stop offset="0.36585" stop-color="rgb(147,82,0)"/><stop offset="0.38792" stop-color="rgb(147,82,0)"/><stop offset="0.39605" stop-color="rgb(150,82,0)"/><stop offset="0.40186" stop-color="rgb(163,82,0)"/><stop offset="0.40767" stop-color="rgb(156,82,0)"/><stop offset="0.41812" stop-color="rgb(155,82,0)"/><stop offset="0.42044" stop-color="rgb(154,120,0)"/><stop offset="0.42625" stop-color="rgb(184,217,0)"/><stop offset="0.44135" stop-color="rgb(189,217,0)"/><stop offset="0.47619" stop-color="rgb(193,217,0)"/><stop offset="0.49361" stop-color="rgb(193,217,0)"/><stop offset="0.50639" stop-color="rgb(186,217,0)"/><stop offset="0.51336" stop-color="rgb(168,186,0)"/><stop offset="0.53426" stop-color="rgb(157,92,0)"/><stop offset="0.53659" stop-color="rgb(156,92,0)"/><stop offset="0.54239" stop-color="rgb(152,92,0)"/><stop offset="0.55052" stop-color="rgb(144,92,0)"/><stop offset="0.55517" stop-color="rgb(139,92,0)"/><stop offset="0.56446" stop-color="rgb(139,92,0)"/><stop offset="0.56911" stop-color="rgb(140,92,0)"/><stop offset="0.59233" stop-color="rgb(135,92,0)"/><stop offset="0.62602" stop-color="rgb(133,92,0)"/><stop offset="0.63066" stop-color="rgb(131,92,0)"/><stop offset="0.66783" stop-color="rgb(131,92,0)"/><stop offset="0.67944" stop-color="rgb(139,92,0)"/><stop offset="0.68525" stop-color="rgb(139,92,0)"/><stop offset="0.69454" stop-color="rgb(140,97,0)"/><stop offset="0.70383" stop-color="rgb(133,102,0)"/><stop offset="0.70499" stop-color="rgb(133,102,0)"/><stop offset="0.72009" stop-color="rgb(117,102,0)"/><stop offset="0.73171" stop-color="rgb(110,102,0)"/><stop offset="0.74797" stop-color="rgb(105,102,0)"/><stop offset="0.75377" stop-color="rgb(111,102,0)"/><stop offset="0.79210" stop-color="rgb(110,102,0)"/><stop offset="0.79907" stop-color="rgb(92,102,0)"/><stop offset="0.82462" stop-color="rgb(92,102,0)"/><stop offset="0.83159" stop-color="rgb(112,102,0)"/><stop offset="0.84553" stop-color="rgb(117,102,0)"/><stop offset="0.85714" stop-color="rgb(142,102,0)"/><stop offset="0.86876" stop-color="rgb(140,102,0)"/><stop offset="0.87573" stop-color="rgb(105,102,0)"/><stop offset="0.89431" stop-color="rgb(105,102,0)"/><stop offset="0.90012" stop-color="rgb(117,102,58)"/><stop offset="0.90592" stop-color="rgb(97,102,116)"/><stop offset="0.91986" stop-color="rgb(99,102,255)"/><stop offset="0.92451" stop-color="rgb(99,102,255)"/><stop offset="0.92915" stop-color="rgb(153,191,255)"/><stop offset="0.94774" stop-color="rgb(152,191,255)"/><stop offset="0.94890" stop-color="rgb(140,191,255)"/><stop offset="0.95354" stop-color="rgb(92,115,255)"/><stop offset="0.95935" stop-color="rgb(87,115,255)"/><stop offset="0.96400" stop-color="rgb(78,115,255)"/><stop offset="0.96632" stop-color="rgb(74,98,255)"/><stop offset="0.96748" stop-color="rgb(74,89,255)"/><stop offset="0.97909" stop-color="rgb(71,89,255)"/><stop offset="0.98374" stop-color="rgb(59,89,255)"/><stop offset="0.99419" stop-color="rgb(59,89,255)"/><stop offset="0.99884" stop-color="rgb(76,89,255)"/><stop offset="1.00000" stop-color="rgb(76,89,255)"/></linearGradient></defs><g filter="url(#sp)"><rect x="0" y="0" width="212" height="861" fill="url(#g_A)"/><rect x="0" y="17" width="212" height="1" fill="rgb(149,33,0)"/><rect x="0" y="29" width="212" height="2" fill="rgb(161,33,0)"/><rect x="0" y="85" width="212" height="3" fill="rgb(199,33,0)"/><rect x="0" y="118" width="212" height="2" fill="rgb(152,33,0)"/><rect x="0" y="137" width="212" height="3" fill="rgb(227,33,0)"/><rect x="0" y="144" width="212" height="1" fill="rgb(153,33,0)"/><rect x="0" y="156" width="212" height="2" fill="rgb(159,33,0)"/><rect x="0" y="171" width="212" height="2" fill="rgb(162,33,0)"/><rect x="0" y="178" width="212" height="2" fill="rgb(159,33,0)"/><rect x="0" y="190" width="212" height="3" fill="rgb(227,33,0)"/><rect x="0" y="213" width="212" height="2" fill="rgb(153,33,0)"/><rect x="0" y="220" width="212" height="2" fill="rgb(169,33,0)"/><rect x="0" y="243" width="212" height="3" fill="rgb(227,33,0)"/><rect x="0" y="296" width="212" height="3" fill="rgb(227,33,0)"/><rect x="0" y="316" width="212" height="2" fill="rgb(164,33,0)"/><rect x="0" y="332" width="212" height="2" fill="rgb(164,33,0)"/><rect x="0" y="342" width="212" height="3" fill="rgb(227,33,0)"/><rect x="0" y="347" width="212" height="2" fill="rgb(179,33,0)"/><rect x="0" y="350" width="212" height="1" fill="rgb(169,33,0)"/><rect x="0" y="363" width="212" height="4" fill="rgb(227,56,0)"/><rect x="0" y="437" width="212" height="3" fill="rgb(227,85,0)"/><rect x="0" y="464" width="212" height="3" fill="rgb(188,37,0)"/><rect x="0" y="472" width="212" height="2" fill="rgb(170,37,0)"/><rect x="0" y="487" width="212" height="2" fill="rgb(169,37,0)"/><rect x="0" y="502" width="212" height="1" fill="rgb(157,37,0)"/><rect x="0" y="540" width="212" height="2" fill="rgb(179,37,0)"/><rect x="0" y="580" width="212" height="1" fill="rgb(153,37,0)"/><rect x="0" y="594" width="212" height="2" fill="rgb(156,38,0)"/><rect x="0" y="600" width="212" height="5" fill="rgb(238,39,0)"/><rect x="0" y="646" width="212" height="3" fill="rgb(147,41,0)"/></g><g filter="url(#sp)"><rect x="507" y="0" width="167" height="861" fill="url(#g_B)"/><rect x="507" y="17" width="167" height="1" fill="rgb(149,33,0)"/><rect x="507" y="29" width="167" height="2" fill="rgb(161,33,0)"/><rect x="507" y="85" width="167" height="3" fill="rgb(199,33,0)"/><rect x="507" y="118" width="167" height="2" fill="rgb(152,33,0)"/><rect x="507" y="137" width="167" height="3" fill="rgb(227,33,0)"/><rect x="507" y="144" width="167" height="1" fill="rgb(153,33,0)"/><rect x="507" y="156" width="167" height="2" fill="rgb(159,33,0)"/><rect x="507" y="171" width="167" height="2" fill="rgb(162,33,0)"/><rect x="507" y="178" width="167" height="2" fill="rgb(159,33,0)"/><rect x="507" y="190" width="167" height="3" fill="rgb(227,33,0)"/><rect x="507" y="213" width="167" height="2" fill="rgb(153,33,0)"/><rect x="507" y="220" width="167" height="2" fill="rgb(169,33,0)"/><rect x="507" y="243" width="167" height="3" fill="rgb(227,33,0)"/><rect x="507" y="296" width="167" height="3" fill="rgb(227,33,0)"/><rect x="507" y="316" width="167" height="2" fill="rgb(164,33,0)"/><rect x="507" y="332" width="167" height="2" fill="rgb(164,33,0)"/><rect x="507" y="342" width="167" height="3" fill="rgb(227,33,0)"/><rect x="507" y="347" width="167" height="2" fill="rgb(179,33,0)"/><rect x="507" y="350" width="167" height="1" fill="rgb(169,33,0)"/><rect x="507" y="363" width="167" height="4" fill="rgb(227,56,0)"/><rect x="507" y="437" width="167" height="3" fill="rgb(227,85,0)"/><rect x="507" y="464" width="167" height="3" fill="rgb(188,37,0)"/><rect x="507" y="472" width="167" height="2" fill="rgb(170,37,0)"/><rect x="507" y="487" width="167" height="2" fill="rgb(169,37,0)"/><rect x="507" y="502" width="167" height="1" fill="rgb(157,37,0)"/><rect x="507" y="540" width="167" height="2" fill="rgb(179,37,0)"/><rect x="507" y="580" width="167" height="1" fill="rgb(153,37,0)"/><rect x="507" y="594" width="167" height="2" fill="rgb(156,38,0)"/><rect x="507" y="600" width="167" height="5" fill="rgb(238,39,0)"/><rect x="507" y="646" width="167" height="3" fill="rgb(147,41,0)"/></g><g filter="url(#sp)"><rect x="927" y="0" width="628" height="861" fill="url(#g_CL)"/><rect x="927" y="17" width="628" height="1" fill="rgb(149,33,0)"/><rect x="927" y="29" width="628" height="2" fill="rgb(161,33,0)"/><rect x="927" y="85" width="628" height="3" fill="rgb(199,33,0)"/><rect x="927" y="118" width="628" height="2" fill="rgb(152,33,0)"/><rect x="927" y="137" width="628" height="3" fill="rgb(227,33,0)"/><rect x="927" y="144" width="628" height="1" fill="rgb(153,33,0)"/><rect x="927" y="156" width="628" height="2" fill="rgb(159,33,0)"/><rect x="927" y="171" width="628" height="2" fill="rgb(162,33,0)"/><rect x="927" y="178" width="628" height="2" fill="rgb(159,33,0)"/><rect x="927" y="190" width="628" height="3" fill="rgb(227,33,0)"/><rect x="927" y="213" width="628" height="2" fill="rgb(153,33,0)"/><rect x="927" y="220" width="628" height="2" fill="rgb(169,33,0)"/><rect x="927" y="243" width="628" height="3" fill="rgb(227,33,0)"/><rect x="927" y="296" width="628" height="3" fill="rgb(227,33,0)"/><rect x="927" y="316" width="628" height="2" fill="rgb(164,33,0)"/><rect x="927" y="332" width="628" height="2" fill="rgb(164,33,0)"/><rect x="927" y="342" width="628" height="3" fill="rgb(227,33,0)"/><rect x="927" y="347" width="628" height="2" fill="rgb(179,33,0)"/><rect x="927" y="350" width="628" height="1" fill="rgb(169,33,0)"/><rect x="927" y="363" width="628" height="4" fill="rgb(227,56,0)"/><rect x="927" y="437" width="628" height="3" fill="rgb(227,85,0)"/><rect x="927" y="464" width="628" height="3" fill="rgb(188,37,0)"/><rect x="927" y="472" width="628" height="2" fill="rgb(170,37,0)"/><rect x="927" y="487" width="628" height="2" fill="rgb(169,37,0)"/><rect x="927" y="502" width="628" height="1" fill="rgb(157,37,0)"/><rect x="927" y="540" width="628" height="2" fill="rgb(179,37,0)"/><rect x="927" y="580" width="628" height="1" fill="rgb(153,37,0)"/><rect x="927" y="594" width="628" height="2" fill="rgb(156,38,0)"/><rect x="927" y="600" width="628" height="5" fill="rgb(238,39,0)"/><rect x="927" y="646" width="628" height="3" fill="rgb(147,41,0)"/></g><mask id="m_CM" maskUnits="userSpaceOnUse" x="1058" y="0" width="450" height="861"><linearGradient id="mg_CM" gradientUnits="userSpaceOnUse" x1="1058" y1="0" x2="1508" y2="0"><stop offset="0.0000" stop-color="#fff" stop-opacity="0"/><stop offset="0.1556" stop-color="#fff" stop-opacity="1"/><stop offset="0.8000" stop-color="#fff" stop-opacity="1"/><stop offset="1.0000" stop-color="#fff" stop-opacity="0"/></linearGradient><rect x="1058" y="0" width="450" height="861" fill="url(#mg_CM)"/></mask><g mask="url(#m_CM)"><g filter="url(#sp)"><rect x="1058" y="0" width="450" height="861" fill="url(#g_CM)"/><rect x="1058" y="17" width="450" height="1" fill="rgb(149,33,0)"/><rect x="1058" y="29" width="450" height="2" fill="rgb(161,33,0)"/><rect x="1058" y="85" width="450" height="3" fill="rgb(199,33,0)"/><rect x="1058" y="118" width="450" height="2" fill="rgb(152,33,0)"/><rect x="1058" y="137" width="450" height="3" fill="rgb(227,33,0)"/><rect x="1058" y="144" width="450" height="1" fill="rgb(153,33,0)"/><rect x="1058" y="156" width="450" height="2" fill="rgb(159,33,0)"/><rect x="1058" y="171" width="450" height="2" fill="rgb(162,33,0)"/><rect x="1058" y="178" width="450" height="2" fill="rgb(159,33,0)"/><rect x="1058" y="190" width="450" height="3" fill="rgb(227,33,0)"/><rect x="1058" y="213" width="450" height="2" fill="rgb(153,33,0)"/><rect x="1058" y="220" width="450" height="2" fill="rgb(169,33,0)"/><rect x="1058" y="243" width="450" height="3" fill="rgb(227,33,0)"/><rect x="1058" y="296" width="450" height="3" fill="rgb(227,33,0)"/><rect x="1058" y="316" width="450" height="2" fill="rgb(164,33,0)"/><rect x="1058" y="332" width="450" height="2" fill="rgb(164,33,0)"/><rect x="1058" y="342" width="450" height="3" fill="rgb(227,33,0)"/><rect x="1058" y="347" width="450" height="2" fill="rgb(179,33,0)"/><rect x="1058" y="350" width="450" height="1" fill="rgb(169,33,0)"/><rect x="1058" y="363" width="450" height="4" fill="rgb(227,56,0)"/><rect x="1058" y="437" width="450" height="3" fill="rgb(227,85,0)"/><rect x="1058" y="464" width="450" height="3" fill="rgb(188,37,0)"/><rect x="1058" y="472" width="450" height="2" fill="rgb(170,37,0)"/><rect x="1058" y="487" width="450" height="2" fill="rgb(169,37,0)"/><rect x="1058" y="502" width="450" height="1" fill="rgb(157,37,0)"/><rect x="1058" y="540" width="450" height="2" fill="rgb(179,37,0)"/><rect x="1058" y="580" width="450" height="1" fill="rgb(153,37,0)"/><rect x="1058" y="594" width="450" height="2" fill="rgb(156,38,0)"/><rect x="1058" y="600" width="450" height="5" fill="rgb(238,39,0)"/><rect x="1058" y="646" width="450" height="3" fill="rgb(147,41,0)"/><rect x="1058" y="828" width="450" height="3" fill="rgb(133,46,255)"/></g></g><mask id="m_CR" maskUnits="userSpaceOnUse" x="1418" y="0" width="137" height="861"><linearGradient id="mg_CR" gradientUnits="userSpaceOnUse" x1="1418" y1="0" x2="1555" y2="0"><stop offset="0.0000" stop-color="#fff" stop-opacity="0"/><stop offset="0.6569" stop-color="#fff" stop-opacity="1"/><stop offset="1.0000" stop-color="#fff" stop-opacity="1"/></linearGradient><rect x="1418" y="0" width="137" height="861" fill="url(#mg_CR)"/></mask><g mask="url(#m_CR)"><g filter="url(#sp)"><rect x="1418" y="0" width="137" height="861" fill="url(#g_CR)"/><rect x="1418" y="17" width="137" height="1" fill="rgb(149,33,0)"/><rect x="1418" y="29" width="137" height="2" fill="rgb(161,33,0)"/><rect x="1418" y="85" width="137" height="3" fill="rgb(199,33,0)"/><rect x="1418" y="118" width="137" height="2" fill="rgb(152,33,0)"/><rect x="1418" y="137" width="137" height="3" fill="rgb(227,33,0)"/><rect x="1418" y="144" width="137" height="1" fill="rgb(153,33,0)"/><rect x="1418" y="156" width="137" height="2" fill="rgb(159,33,0)"/><rect x="1418" y="171" width="137" height="2" fill="rgb(162,33,0)"/><rect x="1418" y="178" width="137" height="2" fill="rgb(159,33,0)"/><rect x="1418" y="190" width="137" height="3" fill="rgb(227,33,0)"/><rect x="1418" y="213" width="137" height="2" fill="rgb(153,33,0)"/><rect x="1418" y="220" width="137" height="2" fill="rgb(169,33,0)"/><rect x="1418" y="243" width="137" height="3" fill="rgb(227,33,0)"/><rect x="1418" y="296" width="137" height="3" fill="rgb(227,33,0)"/><rect x="1418" y="316" width="137" height="2" fill="rgb(164,33,0)"/><rect x="1418" y="332" width="137" height="2" fill="rgb(164,33,0)"/><rect x="1418" y="342" width="137" height="3" fill="rgb(227,33,0)"/><rect x="1418" y="347" width="137" height="2" fill="rgb(179,33,0)"/><rect x="1418" y="350" width="137" height="1" fill="rgb(169,33,0)"/><rect x="1418" y="363" width="137" height="4" fill="rgb(227,56,0)"/><rect x="1418" y="437" width="137" height="3" fill="rgb(227,85,0)"/><rect x="1418" y="464" width="137" height="3" fill="rgb(188,37,0)"/><rect x="1418" y="472" width="137" height="2" fill="rgb(170,37,0)"/><rect x="1418" y="487" width="137" height="2" fill="rgb(169,37,0)"/><rect x="1418" y="502" width="137" height="1" fill="rgb(157,37,0)"/><rect x="1418" y="540" width="137" height="2" fill="rgb(179,37,0)"/><rect x="1418" y="580" width="137" height="1" fill="rgb(153,37,0)"/><rect x="1418" y="594" width="137" height="2" fill="rgb(156,38,0)"/><rect x="1418" y="600" width="137" height="5" fill="rgb(238,39,0)"/><rect x="1418" y="646" width="137" height="3" fill="rgb(147,41,0)"/><rect x="1418" y="828" width="137" height="3" fill="rgb(133,46,255)"/></g></g><g filter="url(#sp)"><rect x="1573" y="0" width="179" height="861" fill="url(#g_D)"/><rect x="1573" y="17" width="179" height="1" fill="rgb(149,33,0)"/><rect x="1573" y="29" width="179" height="2" fill="rgb(161,33,0)"/><rect x="1573" y="85" width="179" height="3" fill="rgb(199,33,0)"/><rect x="1573" y="118" width="179" height="2" fill="rgb(152,33,0)"/><rect x="1573" y="137" width="179" height="3" fill="rgb(227,33,0)"/><rect x="1573" y="144" width="179" height="1" fill="rgb(153,33,0)"/><rect x="1573" y="156" width="179" height="2" fill="rgb(159,33,0)"/><rect x="1573" y="171" width="179" height="2" fill="rgb(162,33,0)"/><rect x="1573" y="178" width="179" height="2" fill="rgb(159,33,0)"/><rect x="1573" y="190" width="179" height="3" fill="rgb(227,33,0)"/><rect x="1573" y="213" width="179" height="2" fill="rgb(153,33,0)"/><rect x="1573" y="220" width="179" height="2" fill="rgb(169,33,0)"/><rect x="1573" y="243" width="179" height="3" fill="rgb(227,33,0)"/><rect x="1573" y="296" width="179" height="3" fill="rgb(227,33,0)"/><rect x="1573" y="316" width="179" height="2" fill="rgb(164,33,0)"/><rect x="1573" y="332" width="179" height="2" fill="rgb(164,33,0)"/><rect x="1573" y="342" width="179" height="3" fill="rgb(227,33,0)"/><rect x="1573" y="347" width="179" height="2" fill="rgb(179,33,0)"/><rect x="1573" y="350" width="179" height="1" fill="rgb(169,33,0)"/><rect x="1573" y="363" width="179" height="4" fill="rgb(227,56,0)"/><rect x="1573" y="437" width="179" height="3" fill="rgb(227,85,0)"/><rect x="1573" y="464" width="179" height="3" fill="rgb(188,37,0)"/><rect x="1573" y="472" width="179" height="2" fill="rgb(170,37,0)"/><rect x="1573" y="487" width="179" height="2" fill="rgb(169,37,0)"/><rect x="1573" y="502" width="179" height="1" fill="rgb(157,37,0)"/><rect x="1573" y="540" width="179" height="2" fill="rgb(179,37,0)"/><rect x="1573" y="580" width="179" height="1" fill="rgb(153,37,0)"/><rect x="1573" y="594" width="179" height="2" fill="rgb(156,38,0)"/><rect x="1573" y="600" width="179" height="5" fill="rgb(238,39,0)"/><rect x="1573" y="646" width="179" height="3" fill="rgb(147,41,0)"/><rect x="1573" y="828" width="179" height="3" fill="rgb(133,46,255)"/></g></svg>
<div class="t" style="left:812.2px;top:6.09px;font-size:10.5px;font-weight:bold;transform-origin:0 50%;transform:scaleX(0.952)">AOS</div>
<div class="t" style="left:839.8px;top:6.09px;font-size:10.5px;font-weight:bold;transform-origin:0 50%;transform:scaleX(1.009)">Fri 17 Apr 2026 00:30:46</div>
<div class="t" style="left:968.2px;top:6.09px;font-size:10.5px;font-weight:bold;transform-origin:0 50%;transform:scaleX(0.952)">AOS</div>
<div class="t" style="left:728.3px;top:18.09px;font-size:10.5px;font-weight:bold;transform-origin:0 50%;transform:scaleX(0.985)">CoordSystem:es18</div>
<div class="t" style="left:832px;top:18.09px;font-size:10.5px;font-weight:bold;transform-origin:0 50%;transform:scaleX(0.97)">SensorID:es18</div>
<div class="t" style="left:916.1px;top:18.09px;font-size:10.5px;font-weight:bold;transform-origin:0 50%;transform:scaleX(0.998)">Axis:sum</div>
<div class="t" style="left:976.6px;top:18.09px;font-size:10.5px;font-weight:bold;transform-origin:0 50%;transform:scaleX(0.953)">Windowing:Hanning</div>
<div class="t" style="left:618.9px;top:30.09px;font-size:10.5px;font-weight:bold;transform-origin:0 50%;transform:scaleX(1.031)">Cuttoff(Hz):200</div>
<div class="t" style="left:714.7px;top:30.09px;font-size:10.5px;font-weight:bold;transform-origin:0 50%;transform:scaleX(1.012)">df(Hz):0.2441</div>
<div class="t" style="left:800px;top:30.09px;font-size:10.5px;font-weight:bold;transform-origin:0 50%;transform:scaleX(0.99)">Sample/Sec:500</div>
<div class="t" style="left:899.8px;top:30.09px;font-size:10.5px;font-weight:bold;transform-origin:0 50%;transform:scaleX(1.019)">PSD size:2048</div>
<div class="t" style="left:994px;top:30.09px;font-size:10.5px;font-weight:bold;transform-origin:0 50%;transform:scaleX(0.972)">Overlap(%):0</div>
<div class="t" style="left:1082.7px;top:30.09px;font-size:10.5px;font-weight:bold;transform-origin:0 50%;transform:scaleX(0.995)">TimeRes.(sec):4.096</div>
<div class="t" style="left:52.5px;top:51.00px;font-size:11px;transform-origin:50% 50%;transform:translateX(-50%) scaleX(0.967)">2724</div>
<div class="t" style="left:79.5px;top:51.00px;font-size:11px;transform-origin:50% 50%;transform:translateX(-50%) scaleX(0.967)">2750</div>
<div class="t" style="left:131.5px;top:51.00px;font-size:11px;transform-origin:50% 50%;transform:translateX(-50%) scaleX(0.967)">2800</div>
<div class="t" style="left:183.5px;top:51.00px;font-size:11px;transform-origin:50% 50%;transform:translateX(-50%) scaleX(0.967)">2850</div>
<div class="t" style="left:235.5px;top:51.00px;font-size:11px;transform-origin:50% 50%;transform:translateX(-50%) scaleX(0.967)">2900</div>
<div class="t" style="left:288.5px;top:51.00px;font-size:11px;transform-origin:50% 50%;transform:translateX(-50%) scaleX(0.967)">2950</div>
<div class="t" style="left:340.5px;top:51.00px;font-size:11px;transform-origin:50% 50%;transform:translateX(-50%) scaleX(0.967)">3000</div>
<div class="t" style="left:392.5px;top:51.00px;font-size:11px;transform-origin:50% 50%;transform:translateX(-50%) scaleX(0.967)">3050</div>
<div class="t" style="left:444.5px;top:51.00px;font-size:11px;transform-origin:50% 50%;transform:translateX(-50%) scaleX(0.967)">3100</div>
<div class="t" style="left:496.5px;top:51.00px;font-size:11px;transform-origin:50% 50%;transform:translateX(-50%) scaleX(0.967)">3150</div>
<div class="t" style="left:548.5px;top:51.00px;font-size:11px;transform-origin:50% 50%;transform:translateX(-50%) scaleX(0.967)">3200</div>
<div class="t" style="left:600.5px;top:51.00px;font-size:11px;transform-origin:50% 50%;transform:translateX(-50%) scaleX(0.967)">3250</div>
<div class="t" style="left:652.5px;top:51.00px;font-size:11px;transform-origin:50% 50%;transform:translateX(-50%) scaleX(0.967)">3300</div>
<div class="t" style="left:704.5px;top:51.00px;font-size:11px;transform-origin:50% 50%;transform:translateX(-50%) scaleX(0.967)">3350</div>
<div class="t" style="left:757.5px;top:51.00px;font-size:11px;transform-origin:50% 50%;transform:translateX(-50%) scaleX(0.967)">3400</div>
<div class="t" style="left:809.5px;top:51.00px;font-size:11px;transform-origin:50% 50%;transform:translateX(-50%) scaleX(0.967)">3450</div>
<div class="t" style="left:861.5px;top:51.00px;font-size:11px;transform-origin:50% 50%;transform:translateX(-50%) scaleX(0.967)">3500</div>
<div class="t" style="left:913.5px;top:51.00px;font-size:11px;transform-origin:50% 50%;transform:translateX(-50%) scaleX(0.967)">3550</div>
<div class="t" style="left:965.5px;top:51.00px;font-size:11px;transform-origin:50% 50%;transform:translateX(-50%) scaleX(0.967)">3600</div>
<div class="t" style="left:1017.5px;top:51.00px;font-size:11px;transform-origin:50% 50%;transform:translateX(-50%) scaleX(0.967)">3650</div>
<div class="t" style="left:1069.5px;top:51.00px;font-size:11px;transform-origin:50% 50%;transform:translateX(-50%) scaleX(0.967)">3700</div>
<div class="t" style="left:1121.5px;top:51.00px;font-size:11px;transform-origin:50% 50%;transform:translateX(-50%) scaleX(0.967)">3750</div>
<div class="t" style="left:1173.5px;top:51.00px;font-size:11px;transform-origin:50% 50%;transform:translateX(-50%) scaleX(0.967)">3800</div>
<div class="t" style="left:1226.5px;top:51.00px;font-size:11px;transform-origin:50% 50%;transform:translateX(-50%) scaleX(0.967)">3850</div>
<div class="t" style="left:1278.5px;top:51.00px;font-size:11px;transform-origin:50% 50%;transform:translateX(-50%) scaleX(0.967)">3900</div>
<div class="t" style="left:1330.5px;top:51.00px;font-size:11px;transform-origin:50% 50%;transform:translateX(-50%) scaleX(0.967)">3950</div>
<div class="t" style="left:1382.5px;top:51.00px;font-size:11px;transform-origin:50% 50%;transform:translateX(-50%) scaleX(0.967)">4000</div>
<div class="t" style="left:1434.5px;top:51.00px;font-size:11px;transform-origin:50% 50%;transform:translateX(-50%) scaleX(0.967)">4050</div>
<div class="t" style="left:1486.5px;top:51.00px;font-size:11px;transform-origin:50% 50%;transform:translateX(-50%) scaleX(0.967)">4100</div>
<div class="t" style="left:1538.5px;top:51.00px;font-size:11px;transform-origin:50% 50%;transform:translateX(-50%) scaleX(0.967)">4150</div>
<div class="t" style="left:1590.5px;top:51.00px;font-size:11px;transform-origin:50% 50%;transform:translateX(-50%) scaleX(0.967)">4200</div>
<div class="t" style="left:1642.5px;top:51.00px;font-size:11px;transform-origin:50% 50%;transform:translateX(-50%) scaleX(0.967)">4250</div>
<div class="t" style="left:1695.5px;top:51.00px;font-size:11px;transform-origin:50% 50%;transform:translateX(-50%) scaleX(0.967)">4300</div>
<div class="t" style="left:1747.5px;top:51.00px;font-size:11px;transform-origin:50% 50%;transform:translateX(-50%) scaleX(0.967)">4350</div>
<div class="t" style="left:1803.5px;top:51.00px;font-size:11px;transform-origin:50% 50%;transform:translateX(-50%) scaleX(0.967)">4404</div>
<div class="t" style="left:43.6px;top:64.00px;font-size:11px;transform-origin:100% 50%;transform:translateX(-100%) scaleX(0.96)">200</div>
<div class="t" style="left:43.6px;top:85.00px;font-size:11px;transform-origin:100% 50%;transform:translateX(-100%) scaleX(0.96)">195</div>
<div class="t" style="left:43.6px;top:107.00px;font-size:11px;transform-origin:100% 50%;transform:translateX(-100%) scaleX(0.96)">190</div>
<div class="t" style="left:43.6px;top:128.00px;font-size:11px;transform-origin:100% 50%;transform:translateX(-100%) scaleX(0.96)">185</div>
<div class="t" style="left:43.6px;top:150.00px;font-size:11px;transform-origin:100% 50%;transform:translateX(-100%) scaleX(0.96)">180</div>
<div class="t" style="left:43.6px;top:171.00px;font-size:11px;transform-origin:100% 50%;transform:translateX(-100%) scaleX(0.96)">175</div>
<div class="t" style="left:43.6px;top:193.00px;font-size:11px;transform-origin:100% 50%;transform:translateX(-100%) scaleX(0.96)">170</div>
<div class="t" style="left:43.6px;top:214.00px;font-size:11px;transform-origin:100% 50%;transform:translateX(-100%) scaleX(0.96)">165</div>
<div class="t" style="left:43.6px;top:236.00px;font-size:11px;transform-origin:100% 50%;transform:translateX(-100%) scaleX(0.96)">160</div>
<div class="t" style="left:43.6px;top:257.00px;font-size:11px;transform-origin:100% 50%;transform:translateX(-100%) scaleX(0.96)">155</div>
<div class="t" style="left:43.6px;top:279.00px;font-size:11px;transform-origin:100% 50%;transform:translateX(-100%) scaleX(0.96)">150</div>
<div class="t" style="left:43.6px;top:300.00px;font-size:11px;transform-origin:100% 50%;transform:translateX(-100%) scaleX(0.96)">145</div>
<div class="t" style="left:43.6px;top:322.00px;font-size:11px;transform-origin:100% 50%;transform:translateX(-100%) scaleX(0.96)">140</div>
<div class="t" style="left:43.6px;top:343.00px;font-size:11px;transform-origin:100% 50%;transform:translateX(-100%) scaleX(0.96)">135</div>
<div class="t" style="left:43.6px;top:365.00px;font-size:11px;transform-origin:100% 50%;transform:translateX(-100%) scaleX(0.96)">130</div>
<div class="t" style="left:43.6px;top:386.00px;font-size:11px;transform-origin:100% 50%;transform:translateX(-100%) scaleX(0.96)">125</div>
<div class="t" style="left:43.6px;top:408.00px;font-size:11px;transform-origin:100% 50%;transform:translateX(-100%) scaleX(0.96)">120</div>
<div class="t" style="left:43.6px;top:429.00px;font-size:11px;transform-origin:100% 50%;transform:translateX(-100%) scaleX(0.96)">115</div>
<div class="t" style="left:43.6px;top:451.00px;font-size:11px;transform-origin:100% 50%;transform:translateX(-100%) scaleX(0.96)">110</div>
<div class="t" style="left:43.6px;top:472.00px;font-size:11px;transform-origin:100% 50%;transform:translateX(-100%) scaleX(0.96)">105</div>
<div class="t" style="left:43.6px;top:494.00px;font-size:11px;transform-origin:100% 50%;transform:translateX(-100%) scaleX(0.96)">100</div>
<div class="t" style="left:43.6px;top:515.00px;font-size:11px;transform-origin:100% 50%;transform:translateX(-100%) scaleX(0.96)">95</div>
<div class="t" style="left:43.6px;top:537.00px;font-size:11px;transform-origin:100% 50%;transform:translateX(-100%) scaleX(0.96)">90</div>
<div class="t" style="left:43.6px;top:558.00px;font-size:11px;transform-origin:100% 50%;transform:translateX(-100%) scaleX(0.96)">85</div>
<div class="t" style="left:43.6px;top:580.00px;font-size:11px;transform-origin:100% 50%;transform:translateX(-100%) scaleX(0.96)">80</div>
<div class="t" style="left:43.6px;top:601.00px;font-size:11px;transform-origin:100% 50%;transform:translateX(-100%) scaleX(0.96)">75</div>
<div class="t" style="left:43.6px;top:623.00px;font-size:11px;transform-origin:100% 50%;transform:translateX(-100%) scaleX(0.96)">70</div>
<div class="t" style="left:43.6px;top:644.00px;font-size:11px;transform-origin:100% 50%;transform:translateX(-100%) scaleX(0.96)">65</div>
<div class="t" style="left:43.6px;top:666.00px;font-size:11px;transform-origin:100% 50%;transform:translateX(-100%) scaleX(0.96)">60</div>
<div class="t" style="left:43.6px;top:687.00px;font-size:11px;transform-origin:100% 50%;transform:translateX(-100%) scaleX(0.96)">55</div>
<div class="t" style="left:43.6px;top:709.00px;font-size:11px;transform-origin:100% 50%;transform:translateX(-100%) scaleX(0.96)">50</div>
<div class="t" style="left:43.6px;top:730.00px;font-size:11px;transform-origin:100% 50%;transform:translateX(-100%) scaleX(0.96)">45</div>
<div class="t" style="left:43.6px;top:752.00px;font-size:11px;transform-origin:100% 50%;transform:translateX(-100%) scaleX(0.96)">40</div>
<div class="t" style="left:43.6px;top:773.00px;font-size:11px;transform-origin:100% 50%;transform:translateX(-100%) scaleX(0.96)">35</div>
<div class="t" style="left:43.6px;top:795.00px;font-size:11px;transform-origin:100% 50%;transform:translateX(-100%) scaleX(0.96)">30</div>
<div class="t" style="left:43.6px;top:816.00px;font-size:11px;transform-origin:100% 50%;transform:translateX(-100%) scaleX(0.96)">25</div>
<div class="t" style="left:43.6px;top:838.00px;font-size:11px;transform-origin:100% 50%;transform:translateX(-100%) scaleX(0.96)">20</div>
<div class="t" style="left:43.6px;top:859.00px;font-size:11px;transform-origin:100% 50%;transform:translateX(-100%) scaleX(0.96)">15</div>
<div class="t" style="left:43.6px;top:881.00px;font-size:11px;transform-origin:100% 50%;transform:translateX(-100%) scaleX(0.96)">10</div>
<div class="t" style="left:43.6px;top:902.00px;font-size:11px;transform-origin:100% 50%;transform:translateX(-100%) scaleX(0.96)">5</div>
<div class="t" style="left:43.6px;top:924.00px;font-size:11px;transform-origin:100% 50%;transform:translateX(-100%) scaleX(0.96)">0</div>
<div class="t" style="left:52.1px;top:938.00px;font-size:11px;transform-origin:50% 50%;transform:translateX(-50%) scaleX(0.98)">22:36:19.314</div>
<div class="t" style="left:51.5px;top:950.00px;font-size:11px;transform-origin:50% 50%;transform:translateX(-50%) scaleX(0.97)">04/16/2026</div>
<div class="t" style="left:184.1px;top:938.00px;font-size:11px;transform-origin:50% 50%;transform:translateX(-50%) scaleX(0.98)">22:45:00.000</div>
<div class="t" style="left:183.5px;top:950.00px;font-size:11px;transform-origin:50% 50%;transform:translateX(-50%) scaleX(0.97)">04/16/2026</div>
<div class="t" style="left:261.1px;top:938.00px;font-size:11px;transform-origin:50% 50%;transform:translateX(-50%) scaleX(0.98)">22:50:00.000</div>
<div class="t" style="left:260.5px;top:950.00px;font-size:11px;transform-origin:50% 50%;transform:translateX(-50%) scaleX(0.97)">04/16/2026</div>
<div class="t" style="left:337.1px;top:938.00px;font-size:11px;transform-origin:50% 50%;transform:translateX(-50%) scaleX(0.98)">22:55:00.000</div>
<div class="t" style="left:336.5px;top:950.00px;font-size:11px;transform-origin:50% 50%;transform:translateX(-50%) scaleX(0.97)">04/16/2026</div>
<div class="t" style="left:414.1px;top:938.00px;font-size:11px;transform-origin:50% 50%;transform:translateX(-50%) scaleX(0.98)">23:00:00.000</div>
<div class="t" style="left:413.5px;top:950.00px;font-size:11px;transform-origin:50% 50%;transform:translateX(-50%) scaleX(0.97)">04/16/2026</div>
<div class="t" style="left:490.1px;top:938.00px;font-size:11px;transform-origin:50% 50%;transform:translateX(-50%) scaleX(0.98)">23:05:00.000</div>
<div class="t" style="left:489.5px;top:950.00px;font-size:11px;transform-origin:50% 50%;transform:translateX(-50%) scaleX(0.97)">04/16/2026</div>
<div class="t" style="left:566.1px;top:938.00px;font-size:11px;transform-origin:50% 50%;transform:translateX(-50%) scaleX(0.98)">23:10:00.000</div>
<div class="t" style="left:565.5px;top:950.00px;font-size:11px;transform-origin:50% 50%;transform:translateX(-50%) scaleX(0.97)">04/16/2026</div>
<div class="t" style="left:643.1px;top:938.00px;font-size:11px;transform-origin:50% 50%;transform:translateX(-50%) scaleX(0.98)">23:15:00.000</div>
<div class="t" style="left:642.5px;top:950.00px;font-size:11px;transform-origin:50% 50%;transform:translateX(-50%) scaleX(0.97)">04/16/2026</div>
<div class="t" style="left:719.1px;top:938.00px;font-size:11px;transform-origin:50% 50%;transform:translateX(-50%) scaleX(0.98)">23:20:00.000</div>
<div class="t" style="left:718.5px;top:950.00px;font-size:11px;transform-origin:50% 50%;transform:translateX(-50%) scaleX(0.97)">04/16/2026</div>
<div class="t" style="left:795.1px;top:938.00px;font-size:11px;transform-origin:50% 50%;transform:translateX(-50%) scaleX(0.98)">23:25:00.000</div>
<div class="t" style="left:794.5px;top:950.00px;font-size:11px;transform-origin:50% 50%;transform:translateX(-50%) scaleX(0.97)">04/16/2026</div>
<div class="t" style="left:872.1px;top:938.00px;font-size:11px;transform-origin:50% 50%;transform:translateX(-50%) scaleX(0.98)">23:30:00.000</div>
<div class="t" style="left:871.5px;top:950.00px;font-size:11px;transform-origin:50% 50%;transform:translateX(-50%) scaleX(0.97)">04/16/2026</div>
<div class="t" style="left:948.1px;top:938.00px;font-size:11px;transform-origin:50% 50%;transform:translateX(-50%) scaleX(0.98)">23:35:00.000</div>
<div class="t" style="left:947.5px;top:950.00px;font-size:11px;transform-origin:50% 50%;transform:translateX(-50%) scaleX(0.97)">04/16/2026</div>
<div class="t" style="left:1024.1px;top:938.00px;font-size:11px;transform-origin:50% 50%;transform:translateX(-50%) scaleX(0.98)">23:40:00.000</div>
<div class="t" style="left:1023.5px;top:950.00px;font-size:11px;transform-origin:50% 50%;transform:translateX(-50%) scaleX(0.97)">04/16/2026</div>
<div class="t" style="left:1101.1px;top:938.00px;font-size:11px;transform-origin:50% 50%;transform:translateX(-50%) scaleX(0.98)">23:45:00.000</div>
<div class="t" style="left:1100.5px;top:950.00px;font-size:11px;transform-origin:50% 50%;transform:translateX(-50%) scaleX(0.97)">04/16/2026</div>
<div class="t" style="left:1177.1px;top:938.00px;font-size:11px;transform-origin:50% 50%;transform:translateX(-50%) scaleX(0.98)">23:50:00.000</div>
<div class="t" style="left:1176.5px;top:950.00px;font-size:11px;transform-origin:50% 50%;transform:translateX(-50%) scaleX(0.97)">04/16/2026</div>
<div class="t" style="left:1253.1px;top:938.00px;font-size:11px;transform-origin:50% 50%;transform:translateX(-50%) scaleX(0.98)">23:55:00.000</div>
<div class="t" style="left:1252.5px;top:950.00px;font-size:11px;transform-origin:50% 50%;transform:translateX(-50%) scaleX(0.97)">04/16/2026</div>
<div class="t" style="left:1330.1px;top:938.00px;font-size:11px;transform-origin:50% 50%;transform:translateX(-50%) scaleX(0.98)">00:00:00.000</div>
<div class="t" style="left:1329.5px;top:950.00px;font-size:11px;transform-origin:50% 50%;transform:translateX(-50%) scaleX(0.97)">04/17/2026</div>
<div class="t" style="left:1406.1px;top:938.00px;font-size:11px;transform-origin:50% 50%;transform:translateX(-50%) scaleX(0.98)">00:05:00.000</div>
<div class="t" style="left:1405.5px;top:950.00px;font-size:11px;transform-origin:50% 50%;transform:translateX(-50%) scaleX(0.97)">04/17/2026</div>
<div class="t" style="left:1482.1px;top:938.00px;font-size:11px;transform-origin:50% 50%;transform:translateX(-50%) scaleX(0.98)">00:10:00.000</div>
<div class="t" style="left:1481.5px;top:950.00px;font-size:11px;transform-origin:50% 50%;transform:translateX(-50%) scaleX(0.97)">04/17/2026</div>
<div class="t" style="left:1559.1px;top:938.00px;font-size:11px;transform-origin:50% 50%;transform:translateX(-50%) scaleX(0.98)">00:15:00.000</div>
<div class="t" style="left:1558.5px;top:950.00px;font-size:11px;transform-origin:50% 50%;transform:translateX(-50%) scaleX(0.97)">04/17/2026</div>
<div class="t" style="left:1635.1px;top:938.00px;font-size:11px;transform-origin:50% 50%;transform:translateX(-50%) scaleX(0.98)">00:20:00.000</div>
<div class="t" style="left:1634.5px;top:950.00px;font-size:11px;transform-origin:50% 50%;transform:translateX(-50%) scaleX(0.97)">04/17/2026</div>
<div class="t" style="left:1711.1px;top:938.00px;font-size:11px;transform-origin:50% 50%;transform:translateX(-50%) scaleX(0.98)">00:25:00.000</div>
<div class="t" style="left:1710.5px;top:950.00px;font-size:11px;transform-origin:50% 50%;transform:translateX(-50%) scaleX(0.97)">04/17/2026</div>
<div class="t" style="left:1803.1px;top:938.00px;font-size:11px;transform-origin:50% 50%;transform:translateX(-50%) scaleX(0.98)">00:31:00.594</div>
<div class="t" style="left:1802.5px;top:950.00px;font-size:11px;transform-origin:50% 50%;transform:translateX(-50%) scaleX(0.97)">04/17/2026</div>
<div class="t" style="left:924.8px;top:964.36px;font-size:9px;transform-origin:50% 50%;transform:translateX(-50%) scaleX(0.96)">Time</div>
<svg style="position:absolute;left:0;top:0" width="1920" height="980" fill="#fff" shape-rendering="crispEdges"><rect x="52" y="63" width="1" height="5"/><rect x="58" y="65" width="1" height="3"/><rect x="69" y="65" width="1" height="3"/><rect x="79" y="63" width="1" height="5"/><rect x="90" y="65" width="1" height="3"/><rect x="100" y="65" width="1" height="3"/><rect x="110" y="65" width="1" height="3"/><rect x="121" y="65" width="1" height="3"/><rect x="131" y="63" width="1" height="5"/><rect x="142" y="65" width="1" height="3"/><rect x="152" y="65" width="1" height="3"/><rect x="162" y="65" width="1" height="3"/><rect x="173" y="65" width="1" height="3"/><rect x="183" y="63" width="1" height="5"/><rect x="194" y="65" width="1" height="3"/><rect x="204" y="65" width="1" height="3"/><rect x="215" y="65" width="1" height="3"/><rect x="225" y="65" width="1" height="3"/><rect x="235" y="63" width="1" height="5"/><rect x="246" y="65" width="1" height="3"/><rect x="256" y="65" width="1" height="3"/><rect x="267" y="65" width="1" height="3"/><rect x="277" y="65" width="1" height="3"/><rect x="288" y="63" width="1" height="5"/><rect x="298" y="65" width="1" height="3"/><rect x="308" y="65" width="1" height="3"/><rect x="319" y="65" width="1" height="3"/><rect x="329" y="65" width="1" height="3"/><rect x="340" y="63" width="1" height="5"/><rect x="350" y="65" width="1" height="3"/><rect x="361" y="65" width="1" height="3"/><rect x="371" y="65" width="1" height="3"/><rect x="381" y="65" width="1" height="3"/><rect x="392" y="63" width="1" height="5"/><rect x="402" y="65" width="1" height="3"/><rect x="413" y="65" width="1" height="3"/><rect x="423" y="65" width="1" height="3"/><rect x="433" y="65" width="1" height="3"/><rect x="444" y="63" width="1" height="5"/><rect x="454" y="65" width="1" height="3"/><rect x="465" y="65" width="1" height="3"/><rect x="475" y="65" width="1" height="3"/><rect x="486" y="65" width="1" height="3"/><rect x="496" y="63" width="1" height="5"/><rect x="506" y="65" width="1" height="3"/><rect x="517" y="65" width="1" height="3"/><rect x="527" y="65" width="1" height="3"/><rect x="538" y="65" width="1" height="3"/><rect x="548" y="63" width="1" height="5"/><rect x="559" y="65" width="1" height="3"/><rect x="569" y="65" width="1" height="3"/><rect x="579" y="65" width="1" height="3"/><rect x="590" y="65" width="1" height="3"/><rect x="600" y="63" width="1" height="5"/><rect x="611" y="65" width="1" height="3"/><rect x="621" y="65" width="1" height="3"/><rect x="631" y="65" width="1" height="3"/><rect x="642" y="65" width="1" height="3"/><rect x="652" y="63" width="1" height="5"/><rect x="663" y="65" width="1" height="3"/><rect x="673" y="65" width="1" height="3"/><rect x="684" y="65" width="1" height="3"/><rect x="694" y="65" width="1" height="3"/><rect x="704" y="63" width="1" height="5"/><rect x="715" y="65" width="1" height="3"/><rect x="725" y="65" width="1" height="3"/><rect x="736" y="65" width="1" height="3"/><rect x="746" y="65" width="1" height="3"/><rect x="757" y="63" width="1" height="5"/><rect x="767" y="65" width="1" height="3"/><rect x="777" y="65" width="1" height="3"/><rect x="788" y="65" width="1" height="3"/><rect x="798" y="65" width="1" height="3"/><rect x="809" y="63" width="1" height="5"/><rect x="819" y="65" width="1" height="3"/><rect x="830" y="65" width="1" height="3"/><rect x="840" y="65" width="1" height="3"/><rect x="850" y="65" width="1" height="3"/><rect x="861" y="63" width="1" height="5"/><rect x="871" y="65" width="1" height="3"/><rect x="882" y="65" width="1" height="3"/><rect x="892" y="65" width="1" height="3"/><rect x="902" y="65" width="1" height="3"/><rect x="913" y="63" width="1" height="5"/><rect x="923" y="65" width="1" height="3"/><rect x="934" y="65" width="1" height="3"/><rect x="944" y="65" width="1" height="3"/><rect x="955" y="65" width="1" height="3"/><rect x="965" y="63" width="1" height="5"/><rect x="975" y="65" width="1" height="3"/><rect x="986" y="65" width="1" height="3"/><rect x="996" y="65" width="1" height="3"/><rect x="1007" y="65" width="1" height="3"/><rect x="1017" y="63" width="1" height="5"/><rect x="1028" y="65" width="1" height="3"/><rect x="1038" y="65" width="1" height="3"/><rect x="1048" y="65" width="1" height="3"/><rect x="1059" y="65" width="1" height="3"/><rect x="1069" y="63" width="1" height="5"/><rect x="1080" y="65" width="1" height="3"/><rect x="1090" y="65" width="1" height="3"/><rect x="1101" y="65" width="1" height="3"/><rect x="1111" y="65" width="1" height="3"/><rect x="1121" y="63" width="1" height="5"/><rect x="1132" y="65" width="1" height="3"/><rect x="1142" y="65" width="1" height="3"/><rect x="1153" y="65" width="1" height="3"/><rect x="1163" y="65" width="1" height="3"/><rect x="1173" y="63" width="1" height="5"/><rect x="1184" y="65" width="1" height="3"/><rect x="1194" y="65" width="1" height="3"/><rect x="1205" y="65" width="1" height="3"/><rect x="1215" y="65" width="1" height="3"/><rect x="1226" y="63" width="1" height="5"/><rect x="1236" y="65" width="1" height="3"/><rect x="1246" y="65" width="1" height="3"/><rect x="1257" y="65" width="1" height="3"/><rect x="1267" y="65" width="1" height="3"/><rect x="1278" y="63" width="1" height="5"/><rect x="1288" y="65" width="1" height="3"/><rect x="1299" y="65" width="1" height="3"/><rect x="1309" y="65" width="1" height="3"/><rect x="1319" y="65" width="1" height="3"/><rect x="1330" y="63" width="1" height="5"/><rect x="1340" y="65" width="1" height="3"/><rect x="1351" y="65" width="1" height="3"/><rect x="1361" y="65" width="1" height="3"/><rect x="1372" y="65" width="1" height="3"/><rect x="1382" y="63" width="1" height="5"/><rect x="1392" y="65" width="1" height="3"/><rect x="1403" y="65" width="1" height="3"/><rect x="1413" y="65" width="1" height="3"/><rect x="1424" y="65" width="1" height="3"/><rect x="1434" y="63" width="1" height="5"/><rect x="1444" y="65" width="1" height="3"/><rect x="1455" y="65" width="1" height="3"/><rect x="1465" y="65" width="1" height="3"/><rect x="1476" y="65" width="1" height="3"/><rect x="1486" y="63" width="1" height="5"/><rect x="1497" y="65" width="1" height="3"/><rect x="1507" y="65" width="1" height="3"/><rect x="1517" y="65" width="1" height="3"/><rect x="1528" y="65" width="1" height="3"/><rect x="1538" y="63" width="1" height="5"/><rect x="1549" y="65" width="1" height="3"/><rect x="1559" y="65" width="1" height="3"/><rect x="1570" y="65" width="1" height="3"/><rect x="1580" y="65" width="1" height="3"/><rect x="1590" y="63" width="1" height="5"/><rect x="1601" y="65" width="1" height="3"/><rect x="1611" y="65" width="1" height="3"/><rect x="1622" y="65" width="1" height="3"/><rect x="1632" y="65" width="1" height="3"/><rect x="1642" y="63" width="1" height="5"/><rect x="1653" y="65" width="1" height="3"/><rect x="1663" y="65" width="1" height="3"/><rect x="1674" y="65" width="1" height="3"/><rect x="1684" y="65" width="1" height="3"/><rect x="1695" y="63" width="1" height="5"/><rect x="1705" y="65" width="1" height="3"/><rect x="1715" y="65" width="1" height="3"/><rect x="1726" y="65" width="1" height="3"/><rect x="1736" y="65" width="1" height="3"/><rect x="1747" y="63" width="1" height="5"/><rect x="1757" y="65" width="1" height="3"/><rect x="1768" y="65" width="1" height="3"/><rect x="1778" y="65" width="1" height="3"/><rect x="1788" y="65" width="1" height="3"/><rect x="1799" y="63" width="1" height="5"/><rect x="1803" y="63" width="1" height="5"/><rect x="45" y="70" width="5" height="1"/><rect x="1806" y="70" width="5" height="1"/><rect x="47" y="80" width="3" height="1"/><rect x="1806" y="80" width="3" height="1"/><rect x="45" y="91" width="5" height="1"/><rect x="1806" y="91" width="5" height="1"/><rect x="47" y="102" width="3" height="1"/><rect x="1806" y="102" width="3" height="1"/><rect x="45" y="113" width="5" height="1"/><rect x="1806" y="113" width="5" height="1"/><rect x="47" y="123" width="3" height="1"/><rect x="1806" y="123" width="3" height="1"/><rect x="45" y="134" width="5" height="1"/><rect x="1806" y="134" width="5" height="1"/><rect x="47" y="145" width="3" height="1"/><rect x="1806" y="145" width="3" height="1"/><rect x="45" y="156" width="5" height="1"/><rect x="1806" y="156" width="5" height="1"/><rect x="47" y="166" width="3" height="1"/><rect x="1806" y="166" width="3" height="1"/><rect x="45" y="177" width="5" height="1"/><rect x="1806" y="177" width="5" height="1"/><rect x="47" y="188" width="3" height="1"/><rect x="1806" y="188" width="3" height="1"/><rect x="45" y="199" width="5" height="1"/><rect x="1806" y="199" width="5" height="1"/><rect x="47" y="209" width="3" height="1"/><rect x="1806" y="209" width="3" height="1"/><rect x="45" y="220" width="5" height="1"/><rect x="1806" y="220" width="5" height="1"/><rect x="47" y="231" width="3" height="1"/><rect x="1806" y="231" width="3" height="1"/><rect x="45" y="242" width="5" height="1"/><rect x="1806" y="242" width="5" height="1"/><rect x="47" y="252" width="3" height="1"/><rect x="1806" y="252" width="3" height="1"/><rect x="45" y="263" width="5" height="1"/><rect x="1806" y="263" width="5" height="1"/><rect x="47" y="274" width="3" height="1"/><rect x="1806" y="274" width="3" height="1"/><rect x="45" y="285" width="5" height="1"/><rect x="1806" y="285" width="5" height="1"/><rect x="47" y="295" width="3" height="1"/><rect x="1806" y="295" width="3" height="1"/><rect x="45" y="306" width="5" height="1"/><rect x="1806" y="306" width="5" height="1"/><rect x="47" y="317" width="3" height="1"/><rect x="1806" y="317" width="3" height="1"/><rect x="45" y="328" width="5" height="1"/><rect x="1806" y="328" width="5" height="1"/><rect x="47" y="338" width="3" height="1"/><rect x="1806" y="338" width="3" height="1"/><rect x="45" y="349" width="5" height="1"/><rect x="1806" y="349" width="5" height="1"/><rect x="47" y="360" width="3" height="1"/><rect x="1806" y="360" width="3" height="1"/><rect x="45" y="371" width="5" height="1"/><rect x="1806" y="371" width="5" height="1"/><rect x="47" y="381" width="3" height="1"/><rect x="1806" y="381" width="3" height="1"/><rect x="45" y="392" width="5" height="1"/><rect x="1806" y="392" width="5" height="1"/><rect x="47" y="403" width="3" height="1"/><rect x="1806" y="403" width="3" height="1"/><rect x="45" y="414" width="5" height="1"/><rect x="1806" y="414" width="5" height="1"/><rect x="47" y="424" width="3" height="1"/><rect x="1806" y="424" width="3" height="1"/><rect x="45" y="435" width="5" height="1"/><rect x="1806" y="435" width="5" height="1"/><rect x="47" y="446" width="3" height="1"/><rect x="1806" y="446" width="3" height="1"/><rect x="45" y="457" width="5" height="1"/><rect x="1806" y="457" width="5" height="1"/><rect x="47" y="467" width="3" height="1"/><rect x="1806" y="467" width="3" height="1"/><rect x="45" y="478" width="5" height="1"/><rect x="1806" y="478" width="5" height="1"/><rect x="47" y="489" width="3" height="1"/><rect x="1806" y="489" width="3" height="1"/><rect x="45" y="500" width="5" height="1"/><rect x="1806" y="500" width="5" height="1"/><rect x="47" y="510" width="3" height="1"/><rect x="1806" y="510" width="3" height="1"/><rect x="45" y="521" width="5" height="1"/><rect x="1806" y="521" width="5" height="1"/><rect x="47" y="532" width="3" height="1"/><rect x="1806" y="532" width="3" height="1"/><rect x="45" y="543" width="5" height="1"/><rect x="1806" y="543" width="5" height="1"/><rect x="47" y="553" width="3" height="1"/><rect x="1806" y="553" width="3" height="1"/><rect x="45" y="564" width="5" height="1"/><rect x="1806" y="564" width="5" height="1"/><rect x="47" y="575" width="3" height="1"/><rect x="1806" y="575" width="3" height="1"/><rect x="45" y="586" width="5" height="1"/><rect x="1806" y="586" width="5" height="1"/><rect x="47" y="596" width="3" height="1"/><rect x="1806" y="596" width="3" height="1"/><rect x="45" y="607" width="5" height="1"/><rect x="1806" y="607" width="5" height="1"/><rect x="47" y="618" width="3" height="1"/><rect x="1806" y="618" width="3" height="1"/><rect x="45" y="629" width="5" height="1"/><rect x="1806" y="629" width="5" height="1"/><rect x="47" y="639" width="3" height="1"/><rect x="1806" y="639" width="3" height="1"/><rect x="45" y="650" width="5" height="1"/><rect x="1806" y="650" width="5" height="1"/><rect x="47" y="661" width="3" height="1"/><rect x="1806" y="661" width="3" height="1"/><rect x="45" y="672" width="5" height="1"/><rect x="1806" y="672" width="5" height="1"/><rect x="47" y="682" width="3" height="1"/><rect x="1806" y="682" width="3" height="1"/><rect x="45" y="693" width="5" height="1"/><rect x="1806" y="693" width="5" height="1"/><rect x="47" y="704" width="3" height="1"/><rect x="1806" y="704" width="3" height="1"/><rect x="45" y="715" width="5" height="1"/><rect x="1806" y="715" width="5" height="1"/><rect x="47" y="725" width="3" height="1"/><rect x="1806" y="725" width="3" height="1"/><rect x="45" y="736" width="5" height="1"/><rect x="1806" y="736" width="5" height="1"/><rect x="47" y="747" width="3" height="1"/><rect x="1806" y="747" width="3" height="1"/><rect x="45" y="758" width="5" height="1"/><rect x="1806" y="758" width="5" height="1"/><rect x="47" y="768" width="3" height="1"/><rect x="1806" y="768" width="3" height="1"/><rect x="45" y="779" width="5" height="1"/><rect x="1806" y="779" width="5" height="1"/><rect x="47" y="790" width="3" height="1"/><rect x="1806" y="790" width="3" height="1"/><rect x="45" y="801" width="5" height="1"/><rect x="1806" y="801" width="5" height="1"/><rect x="47" y="811" width="3" height="1"/><rect x="1806" y="811" width="3" height="1"/><rect x="45" y="822" width="5" height="1"/><rect x="1806" y="822" width="5" height="1"/><rect x="47" y="833" width="3" height="1"/><rect x="1806" y="833" width="3" height="1"/><rect x="45" y="844" width="5" height="1"/><rect x="1806" y="844" width="5" height="1"/><rect x="47" y="854" width="3" height="1"/><rect x="1806" y="854" width="3" height="1"/><rect x="45" y="865" width="5" height="1"/><rect x="1806" y="865" width="5" height="1"/><rect x="47" y="876" width="3" height="1"/><rect x="1806" y="876" width="3" height="1"/><rect x="45" y="887" width="5" height="1"/><rect x="1806" y="887" width="5" height="1"/><rect x="47" y="897" width="3" height="1"/><rect x="1806" y="897" width="3" height="1"/><rect x="45" y="908" width="5" height="1"/><rect x="1806" y="908" width="5" height="1"/><rect x="47" y="919" width="3" height="1"/><rect x="1806" y="919" width="3" height="1"/><rect x="45" y="930" width="5" height="1"/><rect x="1806" y="930" width="5" height="1"/><rect x="52" y="933" width="1" height="5"/><rect x="57" y="933" width="1" height="3"/><rect x="64" y="933" width="1" height="3"/><rect x="70" y="933" width="1" height="3"/><rect x="76" y="933" width="1" height="3"/><rect x="83" y="933" width="1" height="3"/><rect x="89" y="933" width="1" height="3"/><rect x="95" y="933" width="1" height="3"/><rect x="102" y="933" width="1" height="3"/><rect x="108" y="933" width="1" height="5"/><rect x="115" y="933" width="1" height="3"/><rect x="121" y="933" width="1" height="3"/><rect x="127" y="933" width="1" height="3"/><rect x="134" y="933" width="1" height="3"/><rect x="140" y="933" width="1" height="3"/><rect x="146" y="933" width="1" height="3"/><rect x="153" y="933" width="1" height="3"/><rect x="159" y="933" width="1" height="3"/><rect x="165" y="933" width="1" height="3"/><rect x="172" y="933" width="1" height="3"/><rect x="178" y="933" width="1" height="3"/><rect x="184" y="933" width="1" height="5"/><rect x="191" y="933" width="1" height="3"/><rect x="197" y="933" width="1" height="3"/><rect x="204" y="933" width="1" height="3"/><rect x="210" y="933" width="1" height="3"/><rect x="216" y="933" width="1" height="3"/><rect x="223" y="933" width="1" height="3"/><rect x="229" y="933" width="1" height="3"/><rect x="235" y="933" width="1" height="3"/><rect x="242" y="933" width="1" height="3"/><rect x="248" y="933" width="1" height="3"/><rect x="254" y="933" width="1" height="3"/><rect x="261" y="933" width="1" height="5"/><rect x="267" y="933" width="1" height="3"/><rect x="274" y="933" width="1" height="3"/><rect x="280" y="933" width="1" height="3"/><rect x="286" y="933" width="1" height="3"/><rect x="293" y="933" width="1" height="3"/><rect x="299" y="933" width="1" height="3"/><rect x="305" y="933" width="1" height="3"/><rect x="312" y="933" width="1" height="3"/><rect x="318" y="933" width="1" height="3"/><rect x="324" y="933" width="1" height="3"/><rect x="331" y="933" width="1" height="3"/><rect x="337" y="933" width="1" height="5"/><rect x="344" y="933" width="1" height="3"/><rect x="350" y="933" width="1" height="3"/><rect x="356" y="933" width="1" height="3"/><rect x="363" y="933" width="1" height="3"/><rect x="369" y="933" width="1" height="3"/><rect x="375" y="933" width="1" height="3"/><rect x="382" y="933" width="1" height="3"/><rect x="388" y="933" width="1" height="3"/><rect x="394" y="933" width="1" height="3"/><rect x="401" y="933" width="1" height="3"/><rect x="407" y="933" width="1" height="3"/><rect x="414" y="933" width="1" height="5"/><rect x="420" y="933" width="1" height="3"/><rect x="426" y="933" width="1" height="3"/><rect x="433" y="933" width="1" height="3"/><rect x="439" y="933" width="1" height="3"/><rect x="445" y="933" width="1" height="3"/><rect x="452" y="933" width="1" height="3"/><rect x="458" y="933" width="1" height="3"/><rect x="464" y="933" width="1" height="3"/><rect x="471" y="933" width="1" height="3"/><rect x="477" y="933" width="1" height="3"/><rect x="483" y="933" width="1" height="3"/><rect x="490" y="933" width="1" height="5"/><rect x="496" y="933" width="1" height="3"/><rect x="503" y="933" width="1" height="3"/><rect x="509" y="933" width="1" height="3"/><rect x="515" y="933" width="1" height="3"/><rect x="522" y="933" width="1" height="3"/><rect x="528" y="933" width="1" height="3"/><rect x="534" y="933" width="1" height="3"/><rect x="541" y="933" width="1" height="3"/><rect x="547" y="933" width="1" height="3"/><rect x="553" y="933" width="1" height="3"/><rect x="560" y="933" width="1" height="3"/><rect x="566" y="933" width="1" height="5"/><rect x="573" y="933" width="1" height="3"/><rect x="579" y="933" width="1" height="3"/><rect x="585" y="933" width="1" height="3"/><rect x="592" y="933" width="1" height="3"/><rect x="598" y="933" width="1" height="3"/><rect x="604" y="933" width="1" height="3"/><rect x="611" y="933" width="1" height="3"/><rect x="617" y="933" width="1" height="3"/><rect x="623" y="933" width="1" height="3"/><rect x="630" y="933" width="1" height="3"/><rect x="636" y="933" width="1" height="3"/><rect x="643" y="933" width="1" height="5"/><rect x="649" y="933" width="1" height="3"/><rect x="655" y="933" width="1" height="3"/><rect x="662" y="933" width="1" height="3"/><rect x="668" y="933" width="1" height="3"/><rect x="674" y="933" width="1" height="3"/><rect x="681" y="933" width="1" height="3"/><rect x="687" y="933" width="1" height="3"/><rect x="693" y="933" width="1" height="3"/><rect x="700" y="933" width="1" height="3"/><rect x="706" y="933" width="1" height="3"/><rect x="712" y="933" width="1" height="3"/><rect x="719" y="933" width="1" height="5"/><rect x="725" y="933" width="1" height="3"/><rect x="732" y="933" width="1" height="3"/><rect x="738" y="933" width="1" height="3"/><rect x="744" y="933" width="1" height="3"/><rect x="751" y="933" width="1" height="3"/><rect x="757" y="933" width="1" height="3"/><rect x="763" y="933" width="1" height="3"/><rect x="770" y="933" width="1" height="3"/><rect x="776" y="933" width="1" height="3"/><rect x="782" y="933" width="1" height="3"/><rect x="789" y="933" width="1" height="3"/><rect x="795" y="933" width="1" height="5"/><rect x="802" y="933" width="1" height="3"/><rect x="808" y="933" width="1" height="3"/><rect x="814" y="933" width="1" height="3"/><rect x="821" y="933" width="1" height="3"/><rect x="827" y="933" width="1" height="3"/><rect x="833" y="933" width="1" height="3"/><rect x="840" y="933" width="1" height="3"/><rect x="846" y="933" width="1" height="3"/><rect x="852" y="933" width="1" height="3"/><rect x="859" y="933" width="1" height="3"/><rect x="865" y="933" width="1" height="3"/><rect x="872" y="933" width="1" height="5"/><rect x="878" y="933" width="1" height="3"/><rect x="884" y="933" width="1" height="3"/><rect x="891" y="933" width="1" height="3"/><rect x="897" y="933" width="1" height="3"/><rect x="903" y="933" width="1" height="3"/><rect x="910" y="933" width="1" height="3"/><rect x="916" y="933" width="1" height="3"/><rect x="922" y="933" width="1" height="3"/><rect x="929" y="933" width="1" height="3"/><rect x="935" y="933" width="1" height="3"/><rect x="942" y="933" width="1" height="3"/><rect x="948" y="933" width="1" height="5"/><rect x="954" y="933" width="1" height="3"/><rect x="961" y="933" width="1" height="3"/><rect x="967" y="933" width="1" height="3"/><rect x="973" y="933" width="1" height="3"/><rect x="980" y="933" width="1" height="3"/><rect x="986" y="933" width="1" height="3"/><rect x="992" y="933" width="1" height="3"/><rect x="999" y="933" width="1" height="3"/><rect x="1005" y="933" width="1" height="3"/><rect x="1011" y="933" width="1" height="3"/><rect x="1018" y="933" width="1" height="3"/><rect x="1024" y="933" width="1" height="5"/><rect x="1031" y="933" width="1" height="3"/><rect x="1037" y="933" width="1" height="3"/><rect x="1043" y="933" width="1" height="3"/><rect x="1050" y="933" width="1" height="3"/><rect x="1056" y="933" width="1" height="3"/><rect x="1062" y="933" width="1" height="3"/><rect x="1069" y="933" width="1" height="3"/><rect x="1075" y="933" width="1" height="3"/><rect x="1081" y="933" width="1" height="3"/><rect x="1088" y="933" width="1" height="3"/><rect x="1094" y="933" width="1" height="3"/><rect x="1101" y="933" width="1" height="5"/><rect x="1107" y="933" width="1" height="3"/><rect x="1113" y="933" width="1" height="3"/><rect x="1120" y="933" width="1" height="3"/><rect x="1126" y="933" width="1" height="3"/><rect x="1132" y="933" width="1" height="3"/><rect x="1139" y="933" width="1" height="3"/><rect x="1145" y="933" width="1" height="3"/><rect x="1151" y="933" width="1" height="3"/><rect x="1158" y="933" width="1" height="3"/><rect x="1164" y="933" width="1" height="3"/><rect x="1171" y="933" width="1" height="3"/><rect x="1177" y="933" width="1" height="5"/><rect x="1183" y="933" width="1" height="3"/><rect x="1190" y="933" width="1" height="3"/><rect x="1196" y="933" width="1" height="3"/><rect x="1202" y="933" width="1" height="3"/><rect x="1209" y="933" width="1" height="3"/><rect x="1215" y="933" width="1" height="3"/><rect x="1221" y="933" width="1" height="3"/><rect x="1228" y="933" width="1" height="3"/><rect x="1234" y="933" width="1" height="3"/><rect x="1240" y="933" width="1" height="3"/><rect x="1247" y="933" width="1" height="3"/><rect x="1253" y="933" width="1" height="5"/><rect x="1260" y="933" width="1" height="3"/><rect x="1266" y="933" width="1" height="3"/><rect x="1272" y="933" width="1" height="3"/><rect x="1279" y="933" width="1" height="3"/><rect x="1285" y="933" width="1" height="3"/><rect x="1291" y="933" width="1" height="3"/><rect x="1298" y="933" width="1" height="3"/><rect x="1304" y="933" width="1" height="3"/><rect x="1310" y="933" width="1" height="3"/><rect x="1317" y="933" width="1" height="3"/><rect x="1323" y="933" width="1" height="3"/><rect x="1330" y="933" width="1" height="5"/><rect x="1336" y="933" width="1" height="3"/><rect x="1342" y="933" width="1" height="3"/><rect x="1349" y="933" width="1" height="3"/><rect x="1355" y="933" width="1" height="3"/><rect x="1361" y="933" width="1" height="3"/><rect x="1368" y="933" width="1" height="3"/><rect x="1374" y="933" width="1" height="3"/><rect x="1380" y="933" width="1" height="3"/><rect x="1387" y="933" width="1" height="3"/><rect x="1393" y="933" width="1" height="3"/><rect x="1400" y="933" width="1" height="3"/><rect x="1406" y="933" width="1" height="5"/><rect x="1412" y="933" width="1" height="3"/><rect x="1419" y="933" width="1" height="3"/><rect x="1425" y="933" width="1" height="3"/><rect x="1431" y="933" width="1" height="3"/><rect x="1438" y="933" width="1" height="3"/><rect x="1444" y="933" width="1" height="3"/><rect x="1450" y="933" width="1" height="3"/><rect x="1457" y="933" width="1" height="3"/><rect x="1463" y="933" width="1" height="3"/><rect x="1470" y="933" width="1" height="3"/><rect x="1476" y="933" width="1" height="3"/><rect x="1482" y="933" width="1" height="5"/><rect x="1489" y="933" width="1" height="3"/><rect x="1495" y="933" width="1" height="3"/><rect x="1501" y="933" width="1" height="3"/><rect x="1508" y="933" width="1" height="3"/><rect x="1514" y="933" width="1" height="3"/><rect x="1520" y="933" width="1" height="3"/><rect x="1527" y="933" width="1" height="3"/><rect x="1533" y="933" width="1" height="3"/><rect x="1539" y="933" width="1" height="3"/><rect x="1546" y="933" width="1" height="3"/><rect x="1552" y="933" width="1" height="3"/><rect x="1559" y="933" width="1" height="5"/><rect x="1565" y="933" width="1" height="3"/><rect x="1571" y="933" width="1" height="3"/><rect x="1578" y="933" width="1" height="3"/><rect x="1584" y="933" width="1" height="3"/><rect x="1590" y="933" width="1" height="3"/><rect x="1597" y="933" width="1" height="3"/><rect x="1603" y="933" width="1" height="3"/><rect x="1609" y="933" width="1" height="3"/><rect x="1616" y="933" width="1" height="3"/><rect x="1622" y="933" width="1" height="3"/><rect x="1629" y="933" width="1" height="3"/><rect x="1635" y="933" width="1" height="5"/><rect x="1641" y="933" width="1" height="3"/><rect x="1648" y="933" width="1" height="3"/><rect x="1654" y="933" width="1" height="3"/><rect x="1660" y="933" width="1" height="3"/><rect x="1667" y="933" width="1" height="3"/><rect x="1673" y="933" width="1" height="3"/><rect x="1679" y="933" width="1" height="3"/><rect x="1686" y="933" width="1" height="3"/><rect x="1692" y="933" width="1" height="3"/><rect x="1699" y="933" width="1" height="3"/><rect x="1705" y="933" width="1" height="3"/><rect x="1711" y="933" width="1" height="5"/><rect x="1718" y="933" width="1" height="3"/><rect x="1724" y="933" width="1" height="3"/><rect x="1730" y="933" width="1" height="3"/><rect x="1737" y="933" width="1" height="3"/><rect x="1743" y="933" width="1" height="3"/><rect x="1749" y="933" width="1" height="3"/><rect x="1756" y="933" width="1" height="3"/><rect x="1762" y="933" width="1" height="3"/><rect x="1768" y="933" width="1" height="3"/><rect x="1775" y="933" width="1" height="3"/><rect x="1781" y="933" width="1" height="3"/><rect x="1788" y="933" width="1" height="5"/><rect x="1794" y="933" width="1" height="3"/><rect x="1800" y="933" width="1" height="3"/><rect x="1803" y="933" width="1" height="5"/></svg>
<div style="position:absolute;left:1841px;top:79px;width:18px;height:857px;background:linear-gradient(to bottom,#e0106a 0px,#e01858 31px,#e82828 108px,#f07020 201px,#f08820 284px,#f0a818 321px,#f0e818 353px,#c0d830 407px,#a0c830 441px,#60b840 514px,#40a840 539px,#40905a 563px,#30a078 600px,#20b0a8 649px,#18b0c0 690px,#1878a8 717px,#205898 759px,#204888 808px,#203c80 856px)"></div>
<div style="position:absolute;left:1841px;top:74px;width:18px;height:3px;background:#e8508a"></div>
<div style="position:absolute;left:1841px;top:937px;width:18px;height:3px;background:#fff"></div>
<div class="t" style="left:1869px;top:73.00px;font-size:11px;transform-origin:0 50%;transform:scaleX(0.96)">-5.00</div>
<div class="t" style="left:1869px;top:501.00px;font-size:11px;transform-origin:0 50%;transform:scaleX(0.96)">-9.00</div>
<div class="t" style="left:1869px;top:929.00px;font-size:11px;transform-origin:0 50%;transform:scaleX(0.96)">-13.00</div>
<div class="t" style="left:1918.5px;top:444.7px;font-size:11px;transform-origin:0 0;transform:rotate(90deg) scaleX(0.982)">Amplitude(Log10(g^2/Hz))</div>
</body></html>
